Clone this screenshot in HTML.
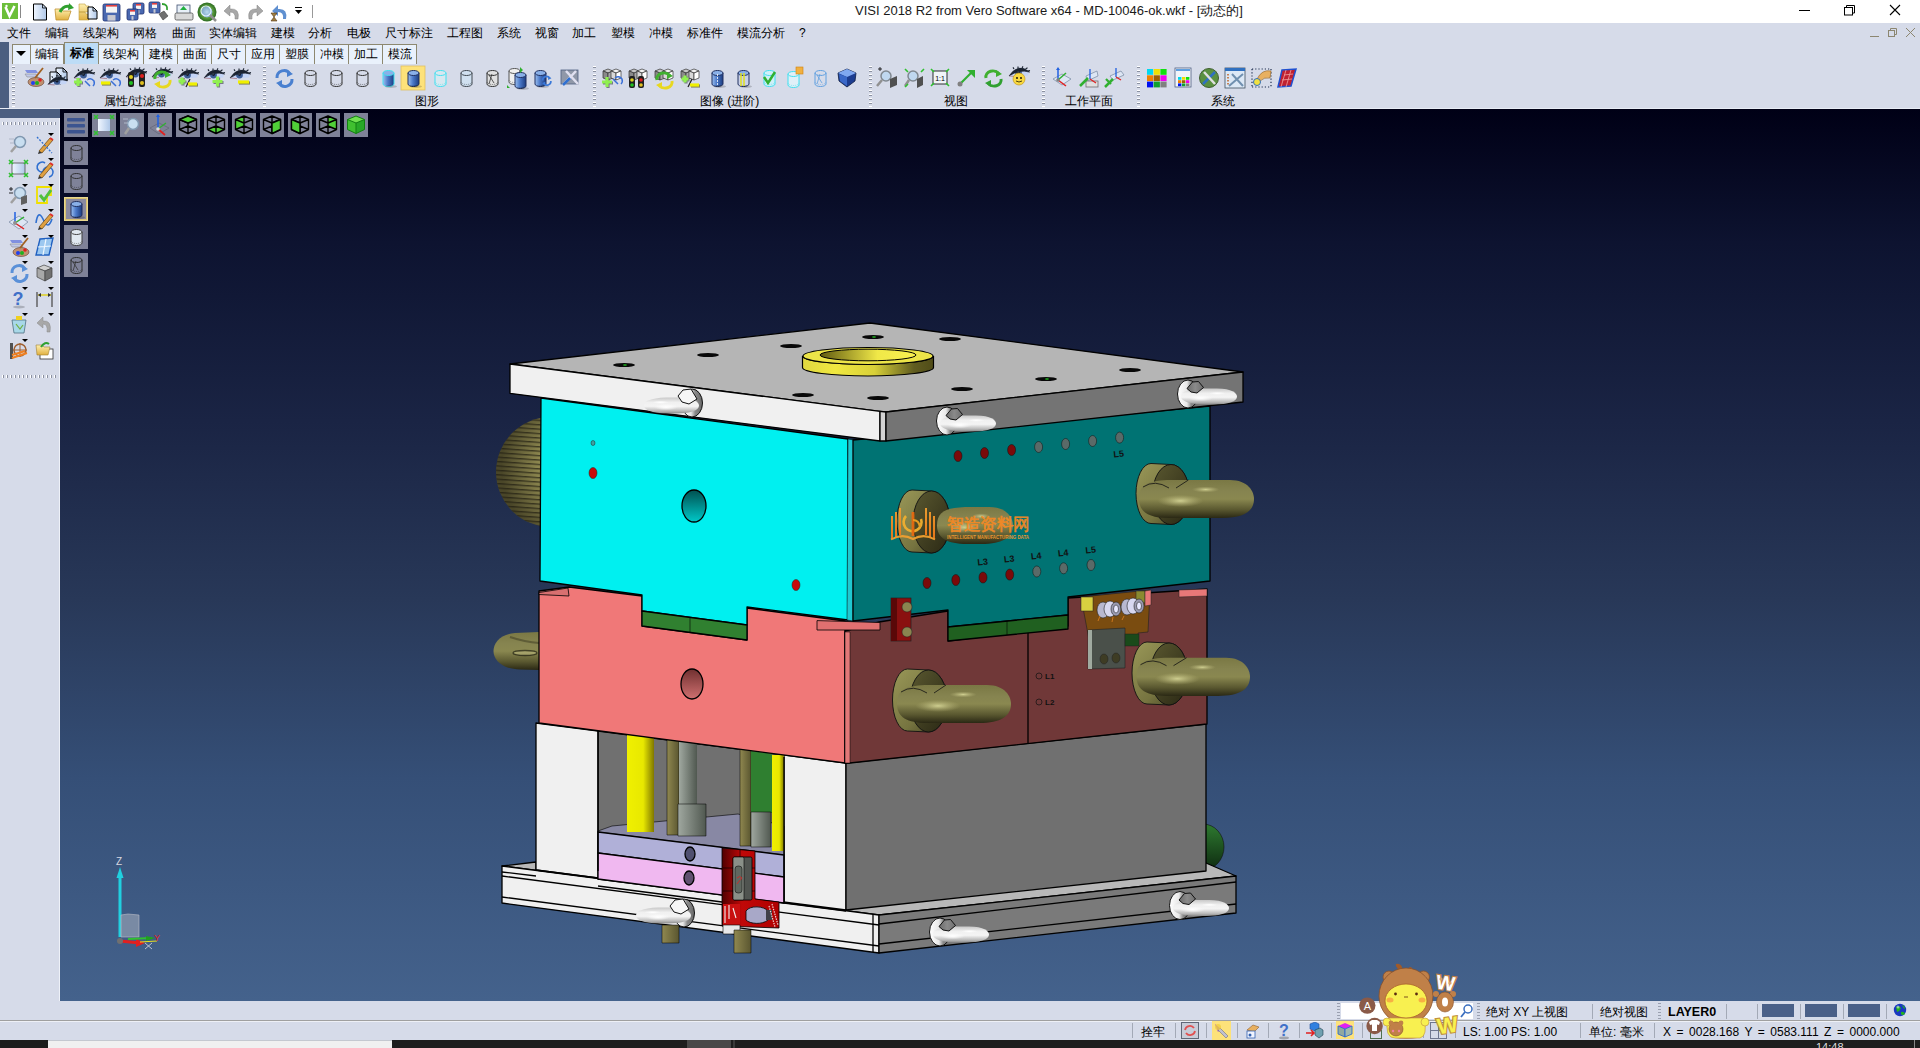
<!DOCTYPE html>
<html><head><meta charset="utf-8">
<style>
*{margin:0;padding:0;box-sizing:border-box}
html,body{width:1920px;height:1048px;overflow:hidden;background:#d6dbe9;font-family:"Liberation Sans",sans-serif;font-size:12px;font-weight:500;color:#000;position:relative}
.a{position:absolute}
.t{position:absolute;white-space:nowrap;line-height:1}
.tab{position:absolute;top:44px;height:20px;border:1px solid #8d8870;border-bottom:none;border-left:none;background:#e9f1fc;font-size:12px;text-align:center;line-height:19px;white-space:nowrap}
.vgrip{position:absolute;width:3px;background:repeating-linear-gradient(180deg,#fff 0 1px,#8a90a0 1px 2px,transparent 2px 4px)}
.hgrip{position:absolute;height:3px;background:repeating-linear-gradient(90deg,#fff 0 1px,#8a90a0 1px 2px,transparent 2px 4px)}
.sep{position:absolute;width:1px;background:#a3a9b6}
</style></head><body>
<!-- title bar -->
<div class="a" style="left:0;top:0;width:1920px;height:23px;background:#fff"></div>
<div class="t" style="left:855px;top:4px;font-size:13px;color:#1a1a1a">VISI 2018 R2 from Vero Software x64 - MD-10046-ok.wkf - [动态的]</div>
<svg class="a" style="left:1790px;top:0" width="130" height="23">
 <line x1="9" y1="10.5" x2="20" y2="10.5" stroke="#000" stroke-width="1"/>
 <rect x="54.5" y="7.5" width="8" height="7.5" fill="none" stroke="#000"/>
 <path d="M56.5 7.5 V5.5 H64.5 V13 H62.5" fill="none" stroke="#000"/>
 <path d="M100 5 L110 15 M110 5 L100 15" stroke="#000" stroke-width="1.1"/>
</svg>
<!-- MDI controls -->
<svg class="a" style="left:1860px;top:24px" width="60" height="18">
 <line x1="10" y1="12.5" x2="19" y2="12.5" stroke="#8c8670" stroke-width="1"/>
 <rect x="28.5" y="6.5" width="6" height="6" fill="none" stroke="#8c8670"/>
 <path d="M30.5 6.5 V4.5 H36.5 V10.5 H34.5" fill="none" stroke="#8c8670"/>
 <path d="M46 4 L55 13 M55 4 L46 13" stroke="#8c8670" stroke-width="1"/>
</svg>

<!-- menu -->
<div class="t" style="left:7px;top:27px">文件</div>
<div class="t" style="left:45px;top:27px">编辑</div>
<div class="t" style="left:83px;top:27px">线架构</div>
<div class="t" style="left:133px;top:27px">网格</div>
<div class="t" style="left:172px;top:27px">曲面</div>
<div class="t" style="left:209px;top:27px">实体编辑</div>
<div class="t" style="left:271px;top:27px">建模</div>
<div class="t" style="left:308px;top:27px">分析</div>
<div class="t" style="left:347px;top:27px">电极</div>
<div class="t" style="left:385px;top:27px">尺寸标注</div>
<div class="t" style="left:447px;top:27px">工程图</div>
<div class="t" style="left:497px;top:27px">系统</div>
<div class="t" style="left:535px;top:27px">视窗</div>
<div class="t" style="left:572px;top:27px">加工</div>
<div class="t" style="left:611px;top:27px">塑模</div>
<div class="t" style="left:649px;top:27px">冲模</div>
<div class="t" style="left:687px;top:27px">标准件</div>
<div class="t" style="left:737px;top:27px">模流分析</div>
<div class="t" style="left:799px;top:27px">?</div>

<!-- blue L strip -->
<div class="a" style="left:0;top:42px;width:9px;height:76px;background:#4b5e80"></div>
<div class="a" style="left:0;top:109px;width:60px;height:9px;background:#4b5e80"></div>

<!-- tabs -->
<div class="a" style="left:12px;top:44px;width:405px;height:20px;background:#e9f1fc;border-top:1px solid #8d8870;border-left:1px solid #8d8870"></div>
<svg class="a" style="left:15px;top:50px" width="12" height="8"><path d="M1 1 H11 L6 6 Z" fill="#000"/></svg>
<div class="tab" style="left:30px;width:34px;border-left:1px solid #8d8870">编辑</div>
<div class="tab" style="left:64px;top:42px;height:22px;width:35px;background:#bddcf6;font-weight:bold;line-height:21px;border-left:1px solid #8d8870">标准</div>
<div class="tab" style="left:99px;width:45px">线架构</div>
<div class="tab" style="left:144px;width:34px">建模</div>
<div class="tab" style="left:178px;width:34px">曲面</div>
<div class="tab" style="left:212px;width:34px">尺寸</div>
<div class="tab" style="left:246px;width:34px">应用</div>
<div class="tab" style="left:280px;width:35px">塑膜</div>
<div class="tab" style="left:315px;width:34px">冲模</div>
<div class="tab" style="left:349px;width:34px">加工</div>
<div class="tab" style="left:383px;width:34px">模流</div>

<!-- toolbar area -->
<div class="a" style="left:9px;top:64px;width:1911px;height:45px;background:#d6dbe9"></div>
<div class="a" style="left:0;top:108px;width:1920px;height:1px;background:#e8ecf5"></div>
<div class="vgrip" style="left:12px;top:66px;height:41px"></div>
<div class="vgrip" style="left:263px;top:66px;height:41px"></div>
<div class="vgrip" style="left:593px;top:66px;height:41px"></div>
<div class="vgrip" style="left:869px;top:66px;height:41px"></div>
<div class="vgrip" style="left:1042px;top:66px;height:41px"></div>
<div class="vgrip" style="left:1137px;top:66px;height:41px"></div>
<div class="t" style="left:104px;top:95px">属性/过滤器</div>
<div class="t" style="left:415px;top:95px">图形</div>
<div class="t" style="left:700px;top:95px">图像 (进阶)</div>
<div class="t" style="left:944px;top:95px">视图</div>
<div class="t" style="left:1065px;top:95px">工作平面</div>
<div class="t" style="left:1211px;top:95px">系统</div>

<!-- left panel -->
<div class="hgrip" style="left:2px;top:122px;width:56px"></div>
<div class="hgrip" style="left:2px;top:375px;width:56px"></div>
<div class="a" style="left:59px;top:118px;width:1px;height:883px;background:#eef1f8"></div>

<div id="vp" class="a" style="left:60px;top:109px;width:1860px;height:892px;background:linear-gradient(#000016 0%,#0d1330 15%,#1a2444 35%,#283858 55%,#354f77 75%,#44628c 100%)"></div>

<svg class="a" style="left:0;top:0" width="1920" height="1048" viewBox="0 0 1920 1048">
<defs>
 <radialGradient id="olv" cx="0.45" cy="0.35" r="0.7"><stop offset="0" stop-color="#c8c088"/><stop offset="0.6" stop-color="#8c8650"/><stop offset="1" stop-color="#4a4628"/></radialGradient>
 <linearGradient id="torO" x1="0" y1="0" x2="0" y2="1"><stop offset="0" stop-color="#7a7844"/><stop offset="0.3" stop-color="#868450"/><stop offset="0.5" stop-color="#8a8850"/><stop offset="0.78" stop-color="#5a5830"/><stop offset="1" stop-color="#2a2814"/></linearGradient>
 <radialGradient id="sph" cx="0.8" cy="0.45" r="0.75"><stop offset="0" stop-color="#d0c888"/><stop offset="0.45" stop-color="#9c9658"/><stop offset="1" stop-color="#4a4628"/></radialGradient>
 <linearGradient id="torW" x1="0" y1="0" x2="0" y2="1"><stop offset="0" stop-color="#c8c8c8"/><stop offset="0.3" stop-color="#f0f0f0"/><stop offset="0.55" stop-color="#f4f4f4"/><stop offset="0.85" stop-color="#b8b8b8"/><stop offset="1" stop-color="#8a8a8a"/></linearGradient>
 <linearGradient id="yel" x1="0" y1="0" x2="1" y2="0"><stop offset="0" stop-color="#e0d840"/><stop offset="0.25" stop-color="#f0e840"/><stop offset="0.55" stop-color="#d8d038"/><stop offset="0.85" stop-color="#605c20"/><stop offset="1" stop-color="#504c18"/></linearGradient>
 <linearGradient id="yelin" x1="0" y1="0" x2="1" y2="0"><stop offset="0" stop-color="#605a10"/><stop offset="0.6" stop-color="#f0e848"/><stop offset="1" stop-color="#f8f050"/></linearGradient>
 <linearGradient id="pinY" x1="0" y1="0" x2="1" y2="0"><stop offset="0" stop-color="#f0f000"/><stop offset="0.6" stop-color="#e8e800"/><stop offset="1" stop-color="#807800"/></linearGradient>
 <linearGradient id="pinO" x1="0" y1="0" x2="1" y2="0"><stop offset="0" stop-color="#908850"/><stop offset="1" stop-color="#5a5630"/></linearGradient>
 <linearGradient id="pinG" x1="0" y1="0" x2="1" y2="0"><stop offset="0" stop-color="#a0a8a0"/><stop offset="1" stop-color="#505850"/></linearGradient>
 <linearGradient id="holeC" x1="0" y1="0" x2="0" y2="1"><stop offset="0" stop-color="#005050"/><stop offset="1" stop-color="#00c8c8"/></linearGradient>
 <linearGradient id="holeP" x1="0" y1="0" x2="0" y2="1"><stop offset="0" stop-color="#703030"/><stop offset="1" stop-color="#d07070"/></linearGradient>
 <pattern id="stripe" width="40" height="4.4" patternUnits="userSpaceOnUse" patternTransform="rotate(4)"><rect y="2.8" width="40" height="1.1" fill="#1e1c10" opacity="0.85"/></pattern>
</defs>
<g stroke="#000" stroke-width="1.3" stroke-linejoin="round">
 <!-- olive sphere left (behind) -->
 <circle cx="551" cy="472" r="55" fill="url(#sph)" stroke="none"/><circle cx="551" cy="472" r="55" fill="url(#stripe)" stroke="none"/>
 <!-- left olive handle on pink -->
 <path d="M539 632 L515 633 C500 634 493.5 643 493.5 651 C493.5 660 502 669 520 669.5 L539 670 Z" fill="url(#torO)" stroke="none"/>
 <ellipse cx="525" cy="653" rx="12" ry="2.5" fill="#c8c488" opacity="0.5"/>
 <path d="M510 637 Q525 642 539 643" stroke="#3a3820" stroke-width="2" fill="none" opacity="0.5"/>
 <!-- green sphere right -->
 <defs><linearGradient id="grS" x1="0" y1="0" x2="0" y2="1"><stop offset="0" stop-color="#2e7a30"/><stop offset="1" stop-color="#0e2a10"/></linearGradient></defs><ellipse cx="1203" cy="847" rx="21" ry="23" fill="url(#grS)" stroke="#111" stroke-width="0.6"/>

 <!-- bottom clamp plate -->
 <polygon points="502,866 536,862 846,902 1206,863 1236,876 879,915" fill="#b8b8b8"/>
 <polygon points="502,866 879,915 879,953 502,903" fill="#f0f0f0"/>
 <polygon points="879,915 1236,876 1236,913 879,953" fill="#7a7a7a"/>
 <polyline points="502,876 879,925" fill="none"/>
 <polyline points="502,897 879,946" fill="none"/>
 <polyline points="879,924 1236,882" fill="none"/>
 <polyline points="879,944 1236,904" fill="none"/>
 <line x1="873" y1="914" x2="873" y2="952"/>
 <line x1="536" y1="862" x2="536" y2="870"/>
 <polyline points="502,872 536,876" fill="none"/>

 <!-- support blocks -->
 <polygon points="536,723 846,763 846,910 536,870" fill="#f0f0f0"/>
 <polygon points="846,763 1206,724 1206,871 846,910" fill="#707070"/>
 <!-- opening interior -->
 <polygon points="598,731 784,755 784,903 598,879" fill="#707070"/>
 <!-- ejector plates -->
 <polygon points="598,831 612,826 738,814 784,826 784,855 598,832" fill="#8888a4" stroke-width="0.6"/>
 <polygon points="598,832 784,855 784,877 598,853" fill="#b0b0d8"/>
 <polygon points="598,853 784,877 784,903 598,879" fill="#f0b8f0"/>
 <ellipse cx="690" cy="854" rx="5" ry="7" fill="#505070"/>
 <ellipse cx="689" cy="878" rx="5" ry="7" fill="#605070"/>
 <!-- pins -->
 <rect x="627" y="733" width="27" height="99" fill="url(#pinY)" stroke="none"/>
 <rect x="667" y="738" width="12" height="97" fill="url(#pinO)" stroke-width="0.5"/>
 <rect x="679" y="740" width="18" height="66" fill="url(#pinG)" stroke="none"/>
 <rect x="678" y="804" width="28" height="32" fill="url(#pinG)" stroke-width="0.5"/>
 <rect x="740" y="748" width="11" height="98" fill="url(#pinO)" stroke-width="0.5"/>
 <rect x="751" y="750" width="21" height="63" fill="#2f7f30" stroke="none"/>
 <rect x="751" y="812" width="20" height="35" fill="url(#pinG)" stroke-width="0.5"/>
 <rect x="772" y="755" width="12" height="96" fill="url(#pinY)" stroke="none"/>
 <!-- red component -->
 <defs><linearGradient id="redG" x1="0" y1="0" x2="1" y2="0"><stop offset="0" stop-color="#500000"/><stop offset="0.35" stop-color="#c00808"/><stop offset="1" stop-color="#b00000"/></linearGradient></defs>
 <polygon points="722,848 755,851 755,899 779,902 779,928 722,926" fill="url(#redG)" stroke-width="0.8"/>
 <path d="M723 868 H755 M723 891 H755 M740 849 V867" stroke="#000" stroke-width="0.6"/>
 <rect x="733" y="857" width="19" height="43" rx="1.5" fill="#505450" stroke-width="0.8"/>
 <rect x="733" y="857" width="11" height="43" rx="1.5" fill="#8a9088" stroke-width="0.6"/>
 <rect x="735" y="866" width="7" height="27" rx="3" fill="#606860" stroke-width="0.5"/>
 <path d="M737 878 q3 -3 5 0 q-3 3 -5 6" stroke="#e02020" stroke-width="0.8" fill="none"/>
 <rect x="723" y="904" width="17" height="21" fill="#c81010" stroke="none"/>
 <path d="M725 906 v17 M729 905 v14 M733 908 l3 10" stroke="#f0f0f0" stroke-width="1.1"/>
 <path d="M746 911 C750 905 764 906 768 911 L768 920 C762 925 750 924 746 920 Z" fill="#a8a8c8" stroke-width="0.8"/>
 <rect x="766" y="910" width="6" height="10" fill="#404048" stroke="none"/>
 <path d="M772 904 L778 925 M769 906 L775 927" stroke="#f0d0d0" stroke-width="1.2" stroke-dasharray="1.5 1"/>
 <rect x="723" y="925" width="17" height="9" fill="#e8e8e8" stroke-width="0.6"/>
 <!-- lower pins -->
 <rect x="662" y="925" width="17" height="18" fill="url(#pinO)" stroke-width="0.5"/>
 <rect x="734" y="930" width="17" height="23" fill="url(#pinO)" stroke-width="0.5"/>
 <line x1="598" y1="731" x2="598" y2="871"/>
 <polyline points="536,870 598,878" fill="none"/>
 <polyline points="784,903 846,911" fill="none"/>
 <polyline points="598,886 722,902" fill="none"/>
 <line x1="784" y1="757" x2="784" y2="903"/>

 <!-- pink B plate front -->
 <polygon points="539,591 569,587 642,596 642,626 747,640 747,608 845,621 845,763 539,723" fill="#f07878"/>
 <polygon points="539,592.5 568,588 569,596 539,594.5" fill="#d87070" stroke-width="0.8"/>
 
 <ellipse cx="692" cy="684" rx="11" ry="15" fill="url(#holeP)"/>
 <!-- dark red right face -->
 <polygon points="845,631 879,622 948,611 948,641 1068,626 1068,598 1207,589 1207,724 850,763 845,763" fill="#703838"/>
 
 <line x1="1028" y1="632" x2="1028" y2="743"/>
 <rect x="845" y="632" width="5" height="131" fill="#e07878" stroke-width="0.5"/>
 <polygon points="817,620.6 880,622.5 880,630 817,630" fill="#e07070" stroke-width="0.8"/>

 <!-- cyan A plate -->
 <polygon points="541,398 848,439 848,620 747,607 747,625 642,611 642,595 540,581" fill="#00f0f0"/>
 <polygon points="848,439 854,440 853,621 847,620" fill="#20c8d0" stroke-width="0.5"/>
 <polygon points="853,440 1210,406 1210,581 1068,597 1068,615 948,627 948,610 853,621" fill="#007373"/>
 <!-- green strips -->
 <polygon points="642,611 747,625 747,640 642,626" fill="#308030"/>
 <line x1="690" y1="617" x2="690" y2="632" stroke-width="0.6"/>
 <polygon points="948,627 1068,615 1068,629 948,641" fill="#206020"/>
 <line x1="1007" y1="621" x2="1007" y2="635" stroke-width="0.6"/>
 <ellipse cx="694" cy="506" rx="12" ry="16" fill="url(#holeC)"/>

 <!-- top clamp plate -->
 <polygon points="510,364 870,323 1243,372 886,412 880,411.3" fill="#b5b5b5"/>
 <polygon points="510,364 880,411.3 880,441 510,393.3" fill="#f0f0f0"/>
 <polygon points="880,411.3 886,412 886,441 880,441" fill="#d4d4d4"/>
 <polygon points="886,412 1243,372 1243,402 886,441" fill="#747474"/>
</g>
<g>
<defs>
<linearGradient id="discW" x1="0" y1="0" x2="1" y2="0"><stop offset="0" stop-color="#ffffff"/><stop offset="0.45" stop-color="#e8e8e8"/><stop offset="0.65" stop-color="#8a8a8a"/><stop offset="1" stop-color="#6a6a6a"/></linearGradient>
<linearGradient id="discWf" x1="1" y1="0" x2="0" y2="0"><stop offset="0" stop-color="#f4f4f4"/><stop offset="0.55" stop-color="#e8e8e8"/><stop offset="0.7" stop-color="#9a9a9a"/><stop offset="1" stop-color="#6a6a6a"/></linearGradient>
<linearGradient id="flO" x1="0" y1="0" x2="1" y2="1"><stop offset="0" stop-color="#9a9858"/><stop offset="0.6" stop-color="#767440"/><stop offset="1" stop-color="#3e3c20"/></linearGradient>
<radialGradient id="hlW"><stop offset="0" stop-color="#fff" stop-opacity="1"/><stop offset="1" stop-color="#fff" stop-opacity="0"/></radialGradient>
<linearGradient id="hexG" x1="0" y1="0" x2="1" y2="0"><stop offset="0" stop-color="#6a6a6a"/><stop offset="0.5" stop-color="#8a8a8a"/><stop offset="1" stop-color="#6e6e6e"/></linearGradient>
<radialGradient id="hlO"><stop offset="0" stop-color="#dcdc9c" stop-opacity="0.85"/><stop offset="1" stop-color="#b8b478" stop-opacity="0"/></radialGradient>
<linearGradient id="bossO" x1="0" y1="0" x2="1" y2="1"><stop offset="0" stop-color="#5a5830"/><stop offset="1" stop-color="#2a2814"/></linearGradient>
</defs>
<ellipse cx="624" cy="365" rx="11" ry="2" fill="#080808"/>
<ellipse cx="625" cy="365" rx="2" ry="0.8" fill="#20c020"/>
<ellipse cx="708" cy="355" rx="11" ry="2" fill="#080808"/>
<ellipse cx="791" cy="346" rx="11" ry="2" fill="#080808"/>
<ellipse cx="873" cy="337" rx="11" ry="2" fill="#080808"/>
<ellipse cx="874" cy="337" rx="2" ry="0.8" fill="#20c020"/>
<ellipse cx="950" cy="339" rx="11" ry="2" fill="#080808"/>
<ellipse cx="803" cy="395" rx="11" ry="2" fill="#080808"/>
<ellipse cx="878" cy="398" rx="11" ry="2" fill="#080808"/>
<ellipse cx="962" cy="389" rx="11" ry="2" fill="#080808"/>
<ellipse cx="1046" cy="379" rx="11" ry="2" fill="#080808"/>
<ellipse cx="1047" cy="379" rx="2" ry="0.8" fill="#20c020"/>
<ellipse cx="1130" cy="370" rx="11" ry="2" fill="#080808"/>
<path d="M802.5 356 A65.5 8.5 0 0 0 933.5 356 L933.5 367.5 A65.5 8.5 0 0 1 802.5 367.5 Z" fill="url(#yel)" stroke="#000" stroke-width="1.2"/>
<ellipse cx="868" cy="356" rx="65" ry="8.5" fill="#ece448" stroke="#000" stroke-width="1.2"/>
<ellipse cx="868" cy="355" rx="48" ry="5.8" fill="url(#yelin)" stroke="#000" stroke-width="1"/>
<ellipse cx="692" cy="403" rx="10.5" ry="14" fill="url(#discW)" stroke="#111" stroke-width="1"/>
<path d="M644 405.5 C644 401.5 650 398.0 666 397.5 L679 397.5 C694 397.5 699 402.3 699 405.5 C699 410.3 691 413.5 675 413.5 L668 413.5 C651 413.5 644 409.5 644 405.5 Z" fill="url(#torW)" stroke="none"/>
<ellipse cx="666.0" cy="407.1" rx="12.1" ry="3.2" fill="url(#hlW)"/>
<ellipse cx="660.5" cy="402.3" rx="8.25" ry="1.6" fill="url(#hlW)"/>
<polygon points="678,396 683,390 691,389 697,399 689,404 682,402" fill="#f6f6f6" stroke="#111" stroke-width="1"/>
<ellipse cx="947" cy="421" rx="10.5" ry="14" fill="url(#discW)" stroke="#111" stroke-width="1"/>
<path d="M940 423.5 C940 419.5 946 416.0 962 415.5 L976 415.5 C991 415.5 996 420.3 996 423.5 C996 428.3 988 431.5 972 431.5 L964 431.5 C947 431.5 940 427.5 940 423.5 Z" fill="url(#torW)" stroke="none"/>
<ellipse cx="959.6" cy="425.1" rx="12.32" ry="3.2" fill="url(#hlW)"/>
<ellipse cx="976.4" cy="420.3" rx="8.4" ry="1.6" fill="url(#hlW)"/>
<polygon points="946,415.5 951.5,409 957.5,408.5 962.5,414.5 956,420 950,419" fill="url(#hexG)" stroke="#111" stroke-width="1"/>
<ellipse cx="1188" cy="394" rx="10.5" ry="14" fill="url(#discW)" stroke="#111" stroke-width="1"/>
<path d="M1181 396.5 C1181 392.5 1187 389.0 1203 388.5 L1217 388.5 C1232 388.5 1237 393.3 1237 396.5 C1237 401.3 1229 404.5 1213 404.5 L1205 404.5 C1188 404.5 1181 400.5 1181 396.5 Z" fill="url(#torW)" stroke="none"/>
<ellipse cx="1200.6" cy="398.1" rx="12.32" ry="3.2" fill="url(#hlW)"/>
<ellipse cx="1217.4" cy="393.3" rx="8.4" ry="1.6" fill="url(#hlW)"/>
<polygon points="1187,388.5 1192.5,382 1198.5,381.5 1203.5,387.5 1197,393 1191,392" fill="url(#hexG)" stroke="#111" stroke-width="1"/>
<ellipse cx="684" cy="913" rx="10.5" ry="14" fill="url(#discW)" stroke="#111" stroke-width="1"/>
<path d="M636 915.5 C636 911.5 642 908.0 658 907.5 L671 907.5 C686 907.5 691 912.3 691 915.5 C691 920.3 683 923.5 667 923.5 L660 923.5 C643 923.5 636 919.5 636 915.5 Z" fill="url(#torW)" stroke="none"/>
<ellipse cx="658.0" cy="917.1" rx="12.1" ry="3.2" fill="url(#hlW)"/>
<ellipse cx="652.5" cy="912.3" rx="8.25" ry="1.6" fill="url(#hlW)"/>
<polygon points="670,906 675,900 683,899 689,909 681,914 674,912" fill="#f6f6f6" stroke="#111" stroke-width="1"/>
<ellipse cx="940" cy="932" rx="10.5" ry="14" fill="url(#discW)" stroke="#111" stroke-width="1"/>
<path d="M933 934.5 C933 930.5 939 927.0 955 926.5 L969 926.5 C984 926.5 989 931.3 989 934.5 C989 939.3 981 942.5 965 942.5 L957 942.5 C940 942.5 933 938.5 933 934.5 Z" fill="url(#torW)" stroke="none"/>
<ellipse cx="952.6" cy="936.1" rx="12.32" ry="3.2" fill="url(#hlW)"/>
<ellipse cx="969.4" cy="931.3" rx="8.4" ry="1.6" fill="url(#hlW)"/>
<polygon points="939,926.5 944.5,920 950.5,919.5 955.5,925.5 949,931 943,930" fill="url(#hexG)" stroke="#111" stroke-width="1"/>
<ellipse cx="1180" cy="905.5" rx="10.5" ry="14" fill="url(#discW)" stroke="#111" stroke-width="1"/>
<path d="M1173 908.0 C1173 904.0 1179 900.5 1195 900.0 L1209 900.0 C1224 900.0 1229 904.8 1229 908.0 C1229 912.8 1221 916.0 1205 916.0 L1197 916.0 C1180 916.0 1173 912.0 1173 908.0 Z" fill="url(#torW)" stroke="none"/>
<ellipse cx="1192.6" cy="909.6" rx="12.32" ry="3.2" fill="url(#hlW)"/>
<ellipse cx="1209.4" cy="904.8" rx="8.4" ry="1.6" fill="url(#hlW)"/>
<polygon points="1179,900.0 1184.5,893.5 1190.5,893.0 1195.5,899.0 1189,904.5 1183,903.5" fill="url(#hexG)" stroke="#111" stroke-width="1"/>
<path d="M912 490 L931.5 491 A18.5 31 0 0 1 931.5 553 L912 552 A15 31 0 0 1 912 490 Z" fill="url(#flO)" stroke="#111" stroke-width="0.9"/>
<ellipse cx="931.5" cy="522" rx="18.5" ry="31" fill="url(#bossO)" stroke="#111" stroke-width="0.9"/>
<path d="M937 525.5 C937 512 945 508 965 507 L989 507 C1007 507 1013 518.1 1013 525.5 C1013 537.34 1003 544 981 544 L967 544 C947 544 937 538 937 525.5 Z" fill="url(#torO)" stroke="none"/>
<ellipse cx="964.36" cy="527.35" rx="15.200000000000001" ry="5.92" fill="url(#hlO)"/>
<ellipse cx="981.08" cy="516.25" rx="9.12" ry="2.96" fill="url(#hlO)"/>

<path d="M1151 463.5 L1171 464.5 A18.4 30 0 0 1 1171 524.5 L1151 523.5 A15 30 0 0 1 1151 463.5 Z" fill="url(#flO)" stroke="#111" stroke-width="0.9"/>
<ellipse cx="1171" cy="494.5" rx="18.4" ry="30" fill="url(#bossO)" stroke="#111" stroke-width="0.9"/>
<path d="M1139 499.0 C1139 485 1147 481 1167 480 L1230 480 C1248 480 1254 491.4 1254 499.0 C1254 511.16 1244 518 1222 518 L1169 518 C1149 518 1139 512 1139 499.0 Z" fill="url(#torO)" stroke="none"/>
<ellipse cx="1180.4" cy="500.9" rx="23.0" ry="6.08" fill="url(#hlO)"/>
<ellipse cx="1205.7" cy="489.5" rx="13.799999999999999" ry="3.04" fill="url(#hlO)"/>
<path d="M1143 487 Q1155 479 1169 488 M1176 488 L1188.4 480" fill="none" stroke="#111" stroke-width="0.8"/>
<path d="M907.5 669 L928.5 670 A18.5 31 0 0 1 928.5 732 L907.5 731 A15 31 0 0 1 907.5 669 Z" fill="url(#flO)" stroke="#111" stroke-width="0.9"/>
<ellipse cx="928.5" cy="701" rx="18.5" ry="31" fill="url(#bossO)" stroke="#111" stroke-width="0.9"/>
<path d="M897 704.0 C897 690 905 686 925 685 L987 685 C1005 685 1011 696.4 1011 704.0 C1011 716.16 1001 723 979 723 L927 723 C907 723 897 717 897 704.0 Z" fill="url(#torO)" stroke="none"/>
<ellipse cx="938.04" cy="705.9" rx="22.8" ry="6.08" fill="url(#hlO)"/>
<ellipse cx="963.12" cy="694.5" rx="13.68" ry="3.04" fill="url(#hlO)"/>
<path d="M901 692 Q913 684 927 693 M934 693 L946.0 685" fill="none" stroke="#111" stroke-width="0.8"/>
<path d="M1147 642 L1169 643 A18.6 31 0 0 1 1169 705 L1147 704 A15 31 0 0 1 1147 642 Z" fill="url(#flO)" stroke="#111" stroke-width="0.9"/>
<ellipse cx="1169" cy="674" rx="18.6" ry="31" fill="url(#bossO)" stroke="#111" stroke-width="0.9"/>
<path d="M1136.5 676.85 C1136.5 662.7 1144.5 658.7 1164.5 657.7 L1226 657.7 C1244 657.7 1250 669.19 1250 676.85 C1250 689.106 1240 696 1218 696 L1166.5 696 C1146.5 696 1136.5 690 1136.5 676.85 Z" fill="url(#torO)" stroke="none"/>
<ellipse cx="1177.36" cy="678.765" rx="22.700000000000003" ry="6.127999999999993" fill="url(#hlO)"/>
<ellipse cx="1202.33" cy="667.2750000000001" rx="13.62" ry="3.0639999999999965" fill="url(#hlO)"/>
<path d="M1140.5 664.7 Q1152.5 656.7 1166.5 665.7 M1173.5 665.7 L1186.6 657.7" fill="none" stroke="#111" stroke-width="0.8"/>
<ellipse cx="958" cy="456" rx="4" ry="5.5" fill="#7a0a0a" stroke="#111" stroke-width="0.5"/>
<ellipse cx="984.5" cy="453" rx="4" ry="5.5" fill="#7a0a0a" stroke="#111" stroke-width="0.5"/>
<ellipse cx="1011.6" cy="450" rx="4" ry="5.5" fill="#7a0a0a" stroke="#111" stroke-width="0.5"/>
<ellipse cx="927" cy="583" rx="4" ry="5.5" fill="#7a0a0a" stroke="#111" stroke-width="0.5"/>
<ellipse cx="955.8" cy="580" rx="4" ry="5.5" fill="#7a0a0a" stroke="#111" stroke-width="0.5"/>
<ellipse cx="983" cy="577.5" rx="4" ry="5.5" fill="#7a0a0a" stroke="#111" stroke-width="0.5"/>
<ellipse cx="1009.7" cy="574.6" rx="4" ry="5.5" fill="#7a0a0a" stroke="#111" stroke-width="0.5"/>
<ellipse cx="1038.6" cy="447" rx="4" ry="5.5" fill="#5a6a68" stroke="#111" stroke-width="0.5"/>
<ellipse cx="1065.6" cy="444" rx="4" ry="5.5" fill="#5a6a68" stroke="#111" stroke-width="0.5"/>
<ellipse cx="1092.6" cy="441" rx="4" ry="5.5" fill="#5a6a68" stroke="#111" stroke-width="0.5"/>
<ellipse cx="1119.6" cy="437.6" rx="4" ry="5.5" fill="#5a6a68" stroke="#111" stroke-width="0.5"/>
<ellipse cx="1036.8" cy="571.5" rx="4" ry="5.5" fill="#5a6a68" stroke="#111" stroke-width="0.5"/>
<ellipse cx="1063.6" cy="568.3" rx="4" ry="5.5" fill="#5a6a68" stroke="#111" stroke-width="0.5"/>
<ellipse cx="1091" cy="565" rx="4" ry="5.5" fill="#5a6a68" stroke="#111" stroke-width="0.5"/>
<text x="1119" y="457" font-family="Liberation Sans" font-size="9" font-weight="bold" text-anchor="middle" fill="#111" transform="rotate(-6 1119 457)">L5</text>
<text x="983" y="565" font-family="Liberation Sans" font-size="9" font-weight="bold" text-anchor="middle" fill="#111" transform="rotate(-6 983 565)">L3</text>
<text x="1009.6" y="562" font-family="Liberation Sans" font-size="9" font-weight="bold" text-anchor="middle" fill="#111" transform="rotate(-6 1009.6 562)">L3</text>
<text x="1036.6" y="559" font-family="Liberation Sans" font-size="9" font-weight="bold" text-anchor="middle" fill="#111" transform="rotate(-6 1036.6 559)">L4</text>
<text x="1063.6" y="556" font-family="Liberation Sans" font-size="9" font-weight="bold" text-anchor="middle" fill="#111" transform="rotate(-6 1063.6 556)">L4</text>
<text x="1091" y="553" font-family="Liberation Sans" font-size="9" font-weight="bold" text-anchor="middle" fill="#111" transform="rotate(-6 1091 553)">L5</text>
<ellipse cx="593" cy="473" rx="4" ry="5.5" fill="#c80a0a" stroke="#222" stroke-width="0.5"/>
<ellipse cx="796" cy="585" rx="4" ry="5.5" fill="#c80a0a" stroke="#222" stroke-width="0.5"/>
<ellipse cx="593" cy="443" rx="2" ry="2.5" fill="#40a0a0" stroke="#222" stroke-width="0.5"/>
<circle cx="1039" cy="676" r="3" fill="none" stroke="#111" stroke-width="0.7"/><text x="1045" y="679" font-family="Liberation Sans" font-size="8" font-weight="bold" fill="#111">L1</text>
<circle cx="1039" cy="702" r="3" fill="none" stroke="#111" stroke-width="0.7"/><text x="1045" y="705" font-family="Liberation Sans" font-size="8" font-weight="bold" fill="#111">L2</text>
<rect x="891" y="598" width="20" height="43" fill="#8a1010" stroke="#222" stroke-width="0.7"/>
<rect x="891" y="598" width="6" height="43" fill="#5a0808" stroke="none"/>
<circle cx="907" cy="607" r="5" fill="#8a8450" stroke="#222" stroke-width="0.5"/>
<circle cx="907" cy="632" r="5" fill="#8a8450" stroke="#222" stroke-width="0.5"/>
<polygon points="1081,597 1150,590 1148,632 1138,633 1138,644 1090,645" fill="#7a4c10" stroke="#222" stroke-width="0.6"/>
<rect x="1081" y="597" width="12" height="14" fill="#d8d040" stroke="#222" stroke-width="0.5"/>
<rect x="1136" y="591" width="9" height="12" fill="#8a8a30" stroke="#222" stroke-width="0.5"/>
<polygon points="1145,591 1151,590 1151,605 1145,606" fill="#e87878" stroke="#222" stroke-width="0.5"/>
<polygon points="1179,590 1207,589 1207,596 1179,597" fill="#e87878" stroke="#222" stroke-width="0.5"/>
<g stroke="#222" stroke-width="0.6">
<ellipse cx="1103" cy="610" rx="6" ry="8" fill="#b8b8d0"/><ellipse cx="1110" cy="609" rx="6" ry="8" fill="#d8d8f0"/><ellipse cx="1116" cy="609" rx="5" ry="7" fill="#9a9ab0"/><ellipse cx="1116" cy="609" rx="2.5" ry="4" fill="#e8e8ff"/>
<ellipse cx="1127" cy="607" rx="6" ry="8" fill="#b8b8d0"/><ellipse cx="1133" cy="606" rx="6" ry="8" fill="#d8d8f0"/><ellipse cx="1139" cy="606" rx="5" ry="7" fill="#9a9ab0"/><ellipse cx="1139" cy="606" rx="2.5" ry="4" fill="#e8e8ff"/>
</g>
<path d="M1098 621 l2 -5 M1112 622 l1 -5 M1122 620 l2 -4" stroke="#e08020" stroke-width="0.8"/>
<polygon points="1088,630 1125,628 1125,668 1088,669" fill="#4a504a" stroke="#222" stroke-width="0.6"/>
<polygon points="1088,630 1092,630 1092,669 1088,669" fill="#a0aaa0" stroke="none"/>
<ellipse cx="1104" cy="659" rx="4" ry="5" fill="#3e3c24" stroke="#222" stroke-width="0.5"/><ellipse cx="1116" cy="658" rx="4" ry="5" fill="#3e3c24" stroke="#222" stroke-width="0.5"/>
<rect x="1125" y="634" width="14" height="12" fill="#1a4a1a" stroke="#222" stroke-width="0.5"/>
</g>
</svg>
<svg class="a" style="left:0;top:0" width="1920" height="1048">
<defs>
<linearGradient id="gBlue" x1="0" y1="0" x2="1" y2="0"><stop offset="0" stop-color="#9cc0f0"/><stop offset="0.45" stop-color="#4a78c8"/><stop offset="1" stop-color="#1c3c80"/></linearGradient>
<linearGradient id="gLBlue" x1="0" y1="0" x2="1" y2="0"><stop offset="0" stop-color="#f0f6ff"/><stop offset="1" stop-color="#b0c8e8"/></linearGradient>
<linearGradient id="gGreen" x1="0" y1="0" x2="0" y2="1"><stop offset="0" stop-color="#90f070"/><stop offset="1" stop-color="#20a020"/></linearGradient>
<linearGradient id="gGray" x1="0" y1="0" x2="1" y2="1"><stop offset="0" stop-color="#e8e8e8"/><stop offset="1" stop-color="#707070"/></linearGradient>
<linearGradient id="gFolder" x1="0" y1="0" x2="0" y2="1"><stop offset="0" stop-color="#fff0b0"/><stop offset="1" stop-color="#e0b040"/></linearGradient>
<radialGradient id="gEye" cx="0.5" cy="0.5" r="0.5"><stop offset="0" stop-color="#203050"/><stop offset="0.5" stop-color="#5878a8"/><stop offset="1" stop-color="#a0b0c8"/></radialGradient>
<radialGradient id="gZoomG" cx="0.5" cy="0.5" r="0.5"><stop offset="0" stop-color="#b8d8f0"/><stop offset="0.55" stop-color="#80a8c8"/><stop offset="0.6" stop-color="#60a040"/><stop offset="1" stop-color="#2a6a20"/></radialGradient>
</defs>
<rect x="2" y="3" width="16" height="16" fill="#6cbf3a"/><path d="M5.5 7 L9.5 16 L14.5 6" fill="none" stroke="#fff" stroke-width="2.6"/><circle cx="6.5" cy="6" r="1.2" fill="#fff"/>
<rect x="20" y="5" width="1" height="13" fill="#888"/>
<path d="M33.5 4 H42.5 L46.5 8 V20 H33.5 Z" fill="url(#gLBlue)" stroke="#000" stroke-width="1"/><path d="M42.5 4 V8 H46.5" fill="none" stroke="#000" stroke-width="0.8"/>
<path d="M55 9 H61 L63 11 H71 L68 20 H56 Z" fill="url(#gFolder)" stroke="#c09030" stroke-width="0.8"/><path d="M60 12 Q64 4 71 7" fill="none" stroke="#30a030" stroke-width="3"/><path d="M69 3 L74 8 L68 10 Z" fill="#30a030"/>
<path d="M79 4 H85 L86 6 H89 V12 H79 Z M79 12 H85 L86 14 H89 V20 H79 Z" fill="url(#gFolder)" stroke="#c0a040" stroke-width="0.6"/><path d="M88 7 H93 L97 11 V19 H88 Z" fill="url(#gLBlue)" stroke="#000" stroke-width="1"/><path d="M93 7 V11 H97" fill="none" stroke="#000" stroke-width="0.8"/>
<rect x="103" y="4" width="17" height="17" rx="1.5" fill="#4a68b0" stroke="#203070" stroke-width="0.8"/>
<rect x="106" y="5" width="11" height="7.65" fill="#f4f4f4"/>
<rect x="106" y="5" width="11" height="1.6" fill="#e04040"/>
<rect x="107.5" y="15.05" width="8" height="5.61" fill="#c8c8d0"/>
<rect x="133" y="3" width="11" height="11" rx="1.5" fill="#4a68b0" stroke="#203070" stroke-width="0.8"/>
<rect x="136" y="4" width="5" height="4.95" fill="#f4f4f4"/>
<rect x="136" y="4" width="5" height="1.6" fill="#e04040"/>
<rect x="137.5" y="10.15" width="2" height="3.6300000000000003" fill="#c8c8d0"/><rect x="127" y="9" width="11" height="11" rx="1.5" fill="#4a68b0" stroke="#203070" stroke-width="0.8"/>
<rect x="130" y="10" width="5" height="4.95" fill="#f4f4f4"/>
<rect x="130" y="10" width="5" height="1.6" fill="#e04040"/>
<rect x="131.5" y="16.15" width="2" height="3.6300000000000003" fill="#c8c8d0"/>
<rect x="149" y="2" width="11" height="11" rx="1.5" fill="#4a68b0" stroke="#203070" stroke-width="0.8"/>
<rect x="152" y="3" width="5" height="4.95" fill="#f4f4f4"/>
<rect x="152" y="3" width="5" height="1.6" fill="#e04040"/>
<rect x="153.5" y="9.15" width="2" height="3.6300000000000003" fill="#c8c8d0"/><path d="M162 4 Q168 4 167 10" fill="none" stroke="#30a030" stroke-width="1.8"/><path d="M159 14 L164 11 L168 16 L163 20 Z" fill="#707070" stroke="#404040" stroke-width="0.6"/>
<rect x="177" y="5" width="13" height="9" fill="#e8f0f8" stroke="#405070" stroke-width="0.8"/><path d="M183.5 6 L187 10 H180 Z" fill="#20b040"/><rect x="175" y="13" width="18" height="7" rx="1.5" fill="#d8d8d8" stroke="#505050" stroke-width="0.8"/>
<circle cx="207" cy="12" r="9.5" fill="url(#gZoomG)"/><circle cx="206" cy="11" r="5" fill="none" stroke="#e0f0ff" stroke-width="1.2"/><path d="M210 15 L216 21" stroke="#909090" stroke-width="2.5"/>
<path d="M238 19 Q240 8 230 9 L230 5 L224 11 L230 16 L230 12 Q236 12 235 19 Z" fill="#a8a8a8" stroke="#808080" stroke-width="0.5"/>
<path d="M249 19 Q247 8 257 9 L257 5 L263 11 L257 16 L257 12 Q251 12 252 19 Z" fill="#a8a8a8" stroke="#808080" stroke-width="0.5"/>
<path d="M286 19 Q288 8 278 9 L278 5 L272 11 L278 16 L278 12 Q284 12 283 19 Z" fill="#6090d0"/><path d="M271 13 H277 L274 17 L277 21 H271 L274 17 Z" fill="#a08040" stroke="#503010" stroke-width="0.6"/>
<path d="M295 7.5 H302" stroke="#000" stroke-width="1"/><path d="M295 10 H302 L298.5 14 Z" fill="#000"/>
<rect x="312" y="5" width="1" height="13" fill="#999"/>
<path d="M25 70 H36 L38 73 H27 Z" fill="#8090e0"/>
<path d="M25 74 H36 L38 77 H27 Z" fill="#c0c8e8" stroke="#808080" stroke-width="0.5"/>
<ellipse cx="36" cy="82" rx="8" ry="4.5" fill="#c09070" stroke="#604030" stroke-width="0.6"/>
<circle cx="33" cy="83" r="2" fill="#2040f0"/><circle cx="37" cy="83" r="2" fill="#20b020"/><circle cx="40" cy="80" r="1.8" fill="#e02020"/>
<path d="M35 78 L43 68" stroke="#a06020" stroke-width="1.8"/>
<path d="M56 68 H63 L67 72 V81 H56 Z" fill="url(#gLBlue)" stroke="#000" stroke-width="1"/><path d="M63 68 V72 H67" fill="none" stroke="#000" stroke-width="0.8"/><path d="M50 72 H57 L61 76 V84 H50 Z" fill="url(#gLBlue)" stroke="#000" stroke-width="1"/><path d="M57 72 V76 H61" fill="none" stroke="#000" stroke-width="0.8"/><g transform="translate(48 74) scale(0.95)"><path d="M0 11 Q10 3 20 7.5 L19 10.5 Q10 11.8 0 11 Z" fill="#c4d4f6"/><circle cx="9.5" cy="8" r="3.4" fill="#3c5c94"/><circle cx="9.5" cy="7.6" r="1.4" fill="#101828"/><circle cx="9" cy="6.6" r="0.8" fill="#d8ecff"/><path d="M0 11 Q9 -2.5 20.5 7 Q10 4 0 11 Z" fill="#1a2230" stroke="#1a2230" stroke-width="0.8"/><path d="M5 4 l-1 -1.6 M9 3 l0 -1.6 M13 3 l1 -1.6 M16.5 4 l2 -1.2 M19 6 l2 -0.5" stroke="#1a2230" stroke-width="1.1"/><path d="M0.5 11 L7 11.6" stroke="#b08898" stroke-width="1"/></g>
<path d="M74 78 Q84 70 94 74.5 L93 77.5 Q84 78.8 74 78 Z" fill="#c4d4f6"/><circle cx="83.5" cy="75" r="3.4" fill="#3c5c94"/><circle cx="83.5" cy="74.6" r="1.4" fill="#101828"/><circle cx="83" cy="73.6" r="0.8" fill="#d8ecff"/><path d="M74 78 Q83 64.5 94.5 74 Q84 71 74 78 Z" fill="#1a2230" stroke="#1a2230" stroke-width="0.8"/><path d="M79 71 l-1 -1.6 M83 70 l0 -1.6 M87 70 l1 -1.6 M90.5 71 l2 -1.2 M93 73 l2 -0.5" stroke="#1a2230" stroke-width="1.1"/><path d="M74.5 78 L81 78.6" stroke="#b08898" stroke-width="1"/><path d="M75.0 83 H83.0 M79 79.0 V87.0" stroke="#505060" stroke-width="3.2" opacity="0.7"/><path d="M74.0 82 H82.0 M78 78.0 V86.0" stroke="#90f050" stroke-width="3.2"/><path d="M85 81 L90 86 M87 80 Q91 77 94 81 Q95 84 93 86" fill="none" stroke="#3a70d8" stroke-width="1.5"/>
<path d="M100 78 Q110 70 120 74.5 L119 77.5 Q110 78.8 100 78 Z" fill="#c4d4f6"/><circle cx="109.5" cy="75" r="3.4" fill="#3c5c94"/><circle cx="109.5" cy="74.6" r="1.4" fill="#101828"/><circle cx="109" cy="73.6" r="0.8" fill="#d8ecff"/><path d="M100 78 Q109 64.5 120.5 74 Q110 71 100 78 Z" fill="#1a2230" stroke="#1a2230" stroke-width="0.8"/><path d="M105 71 l-1 -1.6 M109 70 l0 -1.6 M113 70 l1 -1.6 M116.5 71 l2 -1.2 M119 73 l2 -0.5" stroke="#1a2230" stroke-width="1.1"/><path d="M100.5 78 L107 78.6" stroke="#b08898" stroke-width="1"/><path d="M102 84 H111" stroke="#606020" stroke-width="3.2" opacity="0.7"/><path d="M101 83 H110" stroke="#f0f000" stroke-width="3.2"/><path d="M111 81 L116 86 M113 80 Q117 77 120 81 Q121 84 119 86" fill="none" stroke="#3a70d8" stroke-width="1.5"/>
<path d="M126 77 Q136 69 146 73.5 L145 76.5 Q136 77.8 126 77 Z" fill="#c4d4f6"/><circle cx="135.5" cy="74" r="3.4" fill="#3c5c94"/><circle cx="135.5" cy="73.6" r="1.4" fill="#101828"/><circle cx="135" cy="72.6" r="0.8" fill="#d8ecff"/><path d="M126 77 Q135 63.5 146.5 73 Q136 70 126 77 Z" fill="#1a2230" stroke="#1a2230" stroke-width="0.8"/><path d="M131 70 l-1 -1.6 M135 69 l0 -1.6 M139 69 l1 -1.6 M142.5 70 l2 -1.2 M145 72 l2 -0.5" stroke="#1a2230" stroke-width="1.1"/><path d="M126.5 77 L133 77.6" stroke="#b08898" stroke-width="1"/><rect x="128" y="72" width="6" height="15" rx="2" fill="#202020"/><rect x="139" y="72" width="6" height="15" rx="2" fill="#202020"/><circle cx="131" cy="77" r="2" fill="#e0d020"/><circle cx="131" cy="83" r="2" fill="#20c020"/><circle cx="142" cy="76" r="2" fill="#e02020"/><circle cx="142" cy="83" r="2" fill="#e0c020"/>
<path d="M152 77 Q162 69 172 73.5 L171 76.5 Q162 77.8 152 77 Z" fill="#c4d4f6"/><circle cx="161.5" cy="74" r="3.4" fill="#3c5c94"/><circle cx="161.5" cy="73.6" r="1.4" fill="#101828"/><circle cx="161" cy="72.6" r="0.8" fill="#d8ecff"/><path d="M152 77 Q161 63.5 172.5 73 Q162 70 152 77 Z" fill="#1a2230" stroke="#1a2230" stroke-width="0.8"/><path d="M157 70 l-1 -1.6 M161 69 l0 -1.6 M165 69 l1 -1.6 M168.5 70 l2 -1.2 M171 72 l2 -0.5" stroke="#1a2230" stroke-width="1.1"/><path d="M152.5 77 L159 77.6" stroke="#b08898" stroke-width="1"/><path d="M155 79 A7 6 0 0 1 168 75" fill="none" stroke="#40b030" stroke-width="3"/>
<path d="M165 71 L171 75 L165 78 Z" fill="#40b030"/>
<path d="M170 80 A7 6 0 0 1 157 84" fill="none" stroke="#e8d820" stroke-width="3"/>
<path d="M160 88 L154 84 L160 81 Z" fill="#e8d820"/>
<path d="M178 78 Q188 70 198 74.5 L197 77.5 Q188 78.8 178 78 Z" fill="#c4d4f6"/><circle cx="187.5" cy="75" r="3.4" fill="#3c5c94"/><circle cx="187.5" cy="74.6" r="1.4" fill="#101828"/><circle cx="187" cy="73.6" r="0.8" fill="#d8ecff"/><path d="M178 78 Q187 64.5 198.5 74 Q188 71 178 78 Z" fill="#1a2230" stroke="#1a2230" stroke-width="0.8"/><path d="M183 71 l-1 -1.6 M187 70 l0 -1.6 M191 70 l1 -1.6 M194.5 71 l2 -1.2 M197 73 l2 -0.5" stroke="#1a2230" stroke-width="1.1"/><path d="M178.5 78 L185 78.6" stroke="#b08898" stroke-width="1"/><path d="M179.5 82 H186.5 M183 78.5 V85.5" stroke="#505060" stroke-width="3.2" opacity="0.7"/><path d="M178.5 81 H185.5 M182 77.5 V84.5" stroke="#90f050" stroke-width="3.2"/><path d="M186 87 L190 79" stroke="#202020" stroke-width="1.3"/><path d="M189 85 H198" stroke="#606020" stroke-width="3.2" opacity="0.7"/><path d="M188 84 H197" stroke="#f0f000" stroke-width="3.2"/>
<path d="M204 78 Q214 70 224 74.5 L223 77.5 Q214 78.8 204 78 Z" fill="#c4d4f6"/><circle cx="213.5" cy="75" r="3.4" fill="#3c5c94"/><circle cx="213.5" cy="74.6" r="1.4" fill="#101828"/><circle cx="213" cy="73.6" r="0.8" fill="#d8ecff"/><path d="M204 78 Q213 64.5 224.5 74 Q214 71 204 78 Z" fill="#1a2230" stroke="#1a2230" stroke-width="0.8"/><path d="M209 71 l-1 -1.6 M213 70 l0 -1.6 M217 70 l1 -1.6 M220.5 71 l2 -1.2 M223 73 l2 -0.5" stroke="#1a2230" stroke-width="1.1"/><path d="M204.5 78 L211 78.6" stroke="#b08898" stroke-width="1"/><path d="M213.5 82.5 H223.5 M218.5 77.5 V87.5" stroke="#505060" stroke-width="3.2" opacity="0.7"/><path d="M212.5 81.5 H222.5 M217.5 76.5 V86.5" stroke="#90f050" stroke-width="3.2"/>
<path d="M230 78 Q240 70 250 74.5 L249 77.5 Q240 78.8 230 78 Z" fill="#c4d4f6"/><circle cx="239.5" cy="75" r="3.4" fill="#3c5c94"/><circle cx="239.5" cy="74.6" r="1.4" fill="#101828"/><circle cx="239" cy="73.6" r="0.8" fill="#d8ecff"/><path d="M230 78 Q239 64.5 250.5 74 Q240 71 230 78 Z" fill="#1a2230" stroke="#1a2230" stroke-width="0.8"/><path d="M235 71 l-1 -1.6 M239 70 l0 -1.6 M243 70 l1 -1.6 M246.5 71 l2 -1.2 M249 73 l2 -0.5" stroke="#1a2230" stroke-width="1.1"/><path d="M230.5 78 L237 78.6" stroke="#b08898" stroke-width="1"/><path d="M239 83 H250" stroke="#606020" stroke-width="3.2" opacity="0.7"/><path d="M238 82 H249" stroke="#f0f000" stroke-width="3.2"/>
<path d="M277 78 A7 7 0 0 1 290 74" fill="none" stroke="#4a80d0" stroke-width="3"/>
<path d="M287 70 L293 74 L287 77 Z" fill="#4a80d0"/>
<path d="M292 79 A7 7 0 0 1 279 83" fill="none" stroke="#4a80d0" stroke-width="3"/>
<path d="M282 87 L276 83 L282 80 Z" fill="#4a80d0"/>
<path d="M305 73 V84 A5.5 2.5 0 0 0 316 84 V73" fill="none" stroke="#333" stroke-width="1"/>
<ellipse cx="310.5" cy="73" rx="5.5" ry="2.5" fill="none" stroke="#333" stroke-width="1"/>
<path d="M305 82 A5.5 2.5 0 0 0 316 82" fill="none" stroke="#333" stroke-width="0.6" stroke-dasharray="1 1"/>
<path d="M331 73 V84 A5.5 2.5 0 0 0 342 84 V73" fill="none" stroke="#333" stroke-width="1"/>
<ellipse cx="336.5" cy="73" rx="5.5" ry="2.5" fill="none" stroke="#333" stroke-width="1"/>
<path d="M331 82 A5.5 2.5 0 0 0 342 82" fill="none" stroke="#333" stroke-width="0.6" stroke-dasharray="1 1"/>
<path d="M357 73 V84 A5.5 2.5 0 0 0 368 84 V73" fill="none" stroke="#333" stroke-width="1"/>
<ellipse cx="362.5" cy="73" rx="5.5" ry="2.5" fill="none" stroke="#333" stroke-width="1"/>
<path d="M357 82 A5.5 2.5 0 0 0 368 82" fill="none" stroke="#333" stroke-width="0.6" stroke-dasharray="1 1"/>
<path d="M383 73 V84 A5.5 2.5 0 0 0 394 84 V73 Z" fill="url(#gBlue)" stroke="#40e0f0" stroke-width="1"/>
<ellipse cx="388.5" cy="73" rx="5.5" ry="2.5" fill="#8ab0e8" stroke="#40e0f0" stroke-width="1"/>
<ellipse cx="391" cy="86.5" rx="6" ry="1.5" fill="#000" opacity="0.18"/>
<rect x="401" y="66" width="24" height="24" fill="#fde27a" stroke="#e0c060" stroke-width="0.8"/>
<path d="M408 73 V84 A5.5 2.5 0 0 0 419 84 V73 Z" fill="url(#gBlue)" stroke="#203060" stroke-width="1"/>
<ellipse cx="413.5" cy="73" rx="5.5" ry="2.5" fill="#8ab0e8" stroke="#203060" stroke-width="1"/>
<ellipse cx="416" cy="86.5" rx="6" ry="1.5" fill="#000" opacity="0.18"/>
<path d="M435 73 V84 A5.5 2.5 0 0 0 446 84 V73" fill="#d8e8f0" stroke="#40e0f0" stroke-width="1"/>
<ellipse cx="440.5" cy="73" rx="5.5" ry="2.5" fill="#d8e8f0" stroke="#40e0f0" stroke-width="1"/>
<path d="M435 82 A5.5 2.5 0 0 0 446 82" fill="none" stroke="#40e0f0" stroke-width="0.6" stroke-dasharray="1 1"/>
<path d="M461 73 V84 A5.5 2.5 0 0 0 472 84 V73" fill="#d0e0f0" stroke="#404850" stroke-width="1"/>
<ellipse cx="466.5" cy="73" rx="5.5" ry="2.5" fill="#d0e0f0" stroke="#404850" stroke-width="1"/>
<path d="M461 82 A5.5 2.5 0 0 0 472 82" fill="none" stroke="#404850" stroke-width="0.6" stroke-dasharray="1 1"/>
<path d="M487 73 V84 A5.5 2.5 0 0 0 498 84 V73" fill="#e0e0e0" stroke="#333" stroke-width="1"/>
<ellipse cx="492.5" cy="73" rx="5.5" ry="2.5" fill="#e0e0e0" stroke="#333" stroke-width="1"/>
<path d="M487 82 A5.5 2.5 0 0 0 498 82" fill="none" stroke="#333" stroke-width="0.6" stroke-dasharray="1 1"/><path d="M489 75 L494 83 M492 74 L489 84" stroke="#333" stroke-width="0.8"/>
<path d="M509 71 V82 A5.5 2.5 0 0 0 520 82 V71" fill="#f0f0f0" stroke="#555" stroke-width="1"/>
<ellipse cx="514.5" cy="71" rx="5.5" ry="2.5" fill="#f0f0f0" stroke="#555" stroke-width="1"/>
<path d="M509 80 A5.5 2.5 0 0 0 520 80" fill="none" stroke="#555" stroke-width="0.6" stroke-dasharray="1 1"/><path d="M515 75 V86 A5.5 2.5 0 0 0 526 86 V75 Z" fill="url(#gBlue)" stroke="#203060" stroke-width="1"/>
<ellipse cx="520.5" cy="75" rx="5.5" ry="2.5" fill="#8ab0e8" stroke="#203060" stroke-width="1"/>
<ellipse cx="523" cy="88.5" rx="6" ry="1.5" fill="#000" opacity="0.18"/><path d="M520 67 l3 3 l-3 3 z M507 85 l3 3 l-3 0 z" fill="#30b030"/>
<path d="M535 73 V84 A5.5 2.5 0 0 0 546 84 V73 Z" fill="url(#gBlue)" stroke="#203060" stroke-width="1"/>
<ellipse cx="540.5" cy="73" rx="5.5" ry="2.5" fill="#8ab0e8" stroke="#203060" stroke-width="1"/>
<ellipse cx="543" cy="86.5" rx="6" ry="1.5" fill="#000" opacity="0.18"/><g transform="translate(541 75) scale(0.55)"><path d="M3 10 A7 7 0 0 1 16 6" fill="none" stroke="#3a78d8" stroke-width="3"/>
<path d="M13 2 L19 6 L13 9 Z" fill="#3a78d8"/>
<path d="M18 11 A7 7 0 0 1 5 15" fill="none" stroke="#3a78d8" stroke-width="3"/>
<path d="M8 19 L2 15 L8 12 Z" fill="#3a78d8"/></g>
<rect x="561" y="70" width="17" height="14" fill="#9098a8" stroke="#506080" stroke-width="0.8"/><path d="M563 85 L576 71 M566 71 L578 84" stroke="#e0e0f0" stroke-width="2.5"/><path d="M563 85 L570 78" stroke="#3070d0" stroke-width="2.5"/>
<path d="M603 71 L608 69 L613 71 L608 73 Z" fill="#c8c8c8" stroke="#303030" stroke-width="0.7"/><path d="M603 71 V78 L608 80 V73 Z" fill="#8a8a8a" stroke="#303030" stroke-width="0.7"/><path d="M613 71 V78 L608 80 V73 Z" fill="#a8a8a8" stroke="#303030" stroke-width="0.7"/><path d="M611 71 L616 69 L621 71 L616 73 Z" fill="#f4f4f4" stroke="#303030" stroke-width="0.7"/><path d="M611 71 V78 L616 80 V73 Z" fill="#d8d8d8" stroke="#303030" stroke-width="0.7"/><path d="M621 71 V78 L616 80 V73 Z" fill="#ffffff" stroke="#303030" stroke-width="0.7"/><path d="M603.0 83 H613.0 M608 78.0 V88.0" stroke="#505060" stroke-width="3.2" opacity="0.7"/><path d="M602.0 82 H612.0 M607 77.0 V87.0" stroke="#90f050" stroke-width="3.2"/><path d="M613 79 L618 84 M615 78 Q619 75 622 79 Q623 82 621 84" fill="none" stroke="#3a70d8" stroke-width="1.5"/>
<path d="M629 71 L634 69 L639 71 L634 73 Z" fill="#c8c8c8" stroke="#303030" stroke-width="0.7"/><path d="M629 71 V78 L634 80 V73 Z" fill="#8a8a8a" stroke="#303030" stroke-width="0.7"/><path d="M639 71 V78 L634 80 V73 Z" fill="#a8a8a8" stroke="#303030" stroke-width="0.7"/><path d="M637 71 L642 69 L647 71 L642 73 Z" fill="#f4f4f4" stroke="#303030" stroke-width="0.7"/><path d="M637 71 V78 L642 80 V73 Z" fill="#d8d8d8" stroke="#303030" stroke-width="0.7"/><path d="M647 71 V78 L642 80 V73 Z" fill="#ffffff" stroke="#303030" stroke-width="0.7"/><rect x="629" y="76" width="6" height="12" rx="2" fill="#202020"/><rect x="638" y="76" width="6" height="12" rx="2" fill="#202020"/><circle cx="632" cy="80" r="1.8" fill="#e0d020"/><circle cx="632" cy="85" r="1.8" fill="#20c020"/><circle cx="641" cy="80" r="1.8" fill="#e02020"/><circle cx="641" cy="85" r="1.8" fill="#e0c020"/>
<path d="M655 71 L660 69 L665 71 L660 73 Z" fill="#c8c8c8" stroke="#303030" stroke-width="0.7"/><path d="M655 71 V78 L660 80 V73 Z" fill="#8a8a8a" stroke="#303030" stroke-width="0.7"/><path d="M665 71 V78 L660 80 V73 Z" fill="#a8a8a8" stroke="#303030" stroke-width="0.7"/><path d="M663 71 L668 69 L673 71 L668 73 Z" fill="#f4f4f4" stroke="#303030" stroke-width="0.7"/><path d="M663 71 V78 L668 80 V73 Z" fill="#d8d8d8" stroke="#303030" stroke-width="0.7"/><path d="M673 71 V78 L668 80 V73 Z" fill="#ffffff" stroke="#303030" stroke-width="0.7"/><path d="M657 80 A7 6 0 0 1 670 76" fill="none" stroke="#40b030" stroke-width="3"/>
<path d="M667 72 L673 76 L667 79 Z" fill="#40b030"/>
<path d="M672 81 A7 6 0 0 1 659 85" fill="none" stroke="#e8d820" stroke-width="3"/>
<path d="M662 89 L656 85 L662 82 Z" fill="#e8d820"/>
<path d="M681 71 L686 69 L691 71 L686 73 Z" fill="#c8c8c8" stroke="#303030" stroke-width="0.7"/><path d="M681 71 V78 L686 80 V73 Z" fill="#8a8a8a" stroke="#303030" stroke-width="0.7"/><path d="M691 71 V78 L686 80 V73 Z" fill="#a8a8a8" stroke="#303030" stroke-width="0.7"/><path d="M689 71 L694 69 L699 71 L694 73 Z" fill="#f4f4f4" stroke="#303030" stroke-width="0.7"/><path d="M689 71 V78 L694 80 V73 Z" fill="#d8d8d8" stroke="#303030" stroke-width="0.7"/><path d="M699 71 V78 L694 80 V73 Z" fill="#ffffff" stroke="#303030" stroke-width="0.7"/><path d="M682.5 80 H689.5 M686 76.5 V83.5" stroke="#505060" stroke-width="3.2" opacity="0.7"/><path d="M681.5 79 H688.5 M685 75.5 V82.5" stroke="#90f050" stroke-width="3.2"/><path d="M688 87 L692 79" stroke="#202020" stroke-width="1.3"/><path d="M691 86 H700" stroke="#606020" stroke-width="3.2" opacity="0.7"/><path d="M690 85 H699" stroke="#f0f000" stroke-width="3.2"/>
<path d="M712 73 V84 A5.5 2.5 0 0 0 723 84 V73 Z" fill="url(#gBlue)" stroke="#203060" stroke-width="1"/>
<ellipse cx="717.5" cy="73" rx="5.5" ry="2.5" fill="#8ab0e8" stroke="#203060" stroke-width="1"/>
<ellipse cx="720" cy="86.5" rx="6" ry="1.5" fill="#000" opacity="0.18"/><path d="M717.5 74 V86" stroke="#fff" stroke-width="0.8" stroke-dasharray="2 1"/>
<path d="M738 73 V84 A5.5 2.5 0 0 0 749 84 V73 Z" fill="#c8d0e8" stroke="#203060" stroke-width="1"/>
<ellipse cx="743.5" cy="73" rx="5.5" ry="2.5" fill="#8ab0e8" stroke="#203060" stroke-width="1"/>
<ellipse cx="746" cy="86.5" rx="6" ry="1.5" fill="#000" opacity="0.18"/><path d="M741 73 V86 M744 73 V86" stroke="#e0e020" stroke-width="1.5"/>
<path d="M764 73 V84 A5.5 2.5 0 0 0 775 84 V73" fill="#d0f0f8" stroke="#40e0f0" stroke-width="1"/>
<ellipse cx="769.5" cy="73" rx="5.5" ry="2.5" fill="#d0f0f8" stroke="#40e0f0" stroke-width="1"/>
<path d="M764 82 A5.5 2.5 0 0 0 775 82" fill="none" stroke="#40e0f0" stroke-width="0.6" stroke-dasharray="1 1"/><path d="M764 77 L768 83 L775 72" fill="none" stroke="#30b030" stroke-width="2.5"/>
<path d="M788 74 V85 A5.5 2.5 0 0 0 799 85 V74" fill="#e0f0f8" stroke="#40e0f0" stroke-width="1"/>
<ellipse cx="793.5" cy="74" rx="5.5" ry="2.5" fill="#e0f0f8" stroke="#40e0f0" stroke-width="1"/>
<path d="M788 83 A5.5 2.5 0 0 0 799 83" fill="none" stroke="#40e0f0" stroke-width="0.6" stroke-dasharray="1 1"/><rect x="796" y="67" width="7" height="7" fill="#f0b040" stroke="#d08010" stroke-width="0.6"/>
<path d="M815 73 V84 A5.5 2.5 0 0 0 826 84 V73" fill="none" stroke="#60a0e0" stroke-width="1"/>
<ellipse cx="820.5" cy="73" rx="5.5" ry="2.5" fill="none" stroke="#60a0e0" stroke-width="1"/>
<path d="M815 82 A5.5 2.5 0 0 0 826 82" fill="none" stroke="#60a0e0" stroke-width="0.6" stroke-dasharray="1 1"/><path d="M817 75 L822 83 M820 74 L817 84" stroke="#60a0e0" stroke-width="0.8"/>
<path d="M838 73 L847 69 L856 73 L855 81 L847 87 L839 81 Z" fill="#1c3c90" stroke="#0c1c40" stroke-width="0.8"/><path d="M838 73 L847 69 L856 73 L847 77 Z" fill="#80a8f0"/><path d="M839 74 L847 77 L847 86 L840 81 Z" fill="#3a68c8"/>
<circle cx="886" cy="76" r="5" fill="#c0d8f0" stroke="#808890" stroke-width="1.5"/><path d="M882 80 L877 86" stroke="#909090" stroke-width="2.5"/><path d="M890 79 L897 76 V85 L890 88 Z" fill="#505050"/><path d="M878 69 H882 M880 67 V71" stroke="#000" stroke-width="0.8"/>
<circle cx="913" cy="76" r="5" fill="#c0d8f0" stroke="#808890" stroke-width="1.5"/><path d="M909 80 L905 86" stroke="#909090" stroke-width="2.5"/><path d="M917 79 L923 76 V85 L917 88 Z" fill="#505050"/><path d="M905 69 l3 3 M924 69 l-3 3 M905 87 l3 -3" stroke="#30c030" stroke-width="1.6"/>
<rect x="933" y="71" width="14" height="13" fill="#f0f4f8" stroke="#000" stroke-width="0.8"/><text x="940" y="81" font-size="7" text-anchor="middle" font-family="Liberation Sans" fill="#000">1:1</text><path d="M931 69 l3 3 M949 69 l-3 3 M931 86 l3 -3 M949 86 l-3 -3" stroke="#30c030" stroke-width="1.6"/>
<path d="M960 84 L973 71" stroke="#30b030" stroke-width="2.2"/><path d="M967 70 H975 V78 Z" fill="#30b030"/><circle cx="960" cy="84" r="2.5" fill="#808080"/>
<path d="M986 78 A7 6 0 0 1 999 74" fill="none" stroke="#40b030" stroke-width="3"/>
<path d="M996 70 L1002 74 L996 77 Z" fill="#40b030"/>
<path d="M1001 79 A7 6 0 0 1 988 83" fill="none" stroke="#30a030" stroke-width="3"/>
<path d="M991 87 L985 83 L991 80 Z" fill="#30a030"/>
<path d="M1009 76 Q1019 68 1029 72.5 L1028 75.5 Q1019 76.8 1009 76 Z" fill="#c4d4f6"/><circle cx="1018.5" cy="73" r="3.4" fill="#3c5c94"/><circle cx="1018.5" cy="72.6" r="1.4" fill="#101828"/><circle cx="1018" cy="71.6" r="0.8" fill="#d8ecff"/><path d="M1009 76 Q1018 62.5 1029.5 72 Q1019 69 1009 76 Z" fill="#1a2230" stroke="#1a2230" stroke-width="0.8"/><path d="M1014 69 l-1 -1.6 M1018 68 l0 -1.6 M1022 68 l1 -1.6 M1025.5 69 l2 -1.2 M1028 71 l2 -0.5" stroke="#1a2230" stroke-width="1.1"/><path d="M1009.5 76 L1016 76.6" stroke="#b08898" stroke-width="1"/><circle cx="1019" cy="79" r="6" fill="#f8d840" stroke="#c09010" stroke-width="0.6"/><circle cx="1017" cy="78" r="0.9" fill="#000"/><circle cx="1021" cy="78" r="0.9" fill="#000"/><path d="M1016 81 Q1019 83 1022 81" fill="none" stroke="#000" stroke-width="0.7"/>
<path d="M1053 79 L1062 74 L1071 79 L1062 85 Z" fill="#dde6f4" stroke="#8090a8" stroke-width="0.8"/><path d="M1058 80 V69" stroke="#2060e0" stroke-width="1.5"/><path d="M1056 70 l2 -3 l2 3z" fill="#2060e0"/><path d="M1058 80 L1066 73" stroke="#30b030" stroke-width="1.5"/><path d="M1058 80 L1066 86" stroke="#e02020" stroke-width="1.5"/><circle cx="1058" cy="80" r="1.8" fill="#808080"/>
<path d="M1086 76 L1097 71 L1098 76 L1087 81 Z" fill="#dde6f4" stroke="#8090a8" stroke-width="0.8"/><rect x="1086" y="81" width="12" height="6" fill="#e0e0e0" stroke="#707070" stroke-width="0.8"/><path d="M1090 79 V69" stroke="#2060e0" stroke-width="1.3"/><path d="M1080 86 L1088 78" stroke="#30b030" stroke-width="2.5"/><path d="M1090 79 L1096 83" stroke="#e02020" stroke-width="1.2"/>
<path d="M1110 76 L1121 71 L1124 75 L1113 80 Z" fill="#dde6f4" stroke="#8090a8" stroke-width="0.8"/><path d="M1116 77 V68" stroke="#2060e0" stroke-width="1.3"/><path d="M1105 87 L1113 79" stroke="#30b030" stroke-width="2.5"/><path d="M1106 79 L1111 84" stroke="#30b030" stroke-width="2.2"/><path d="M1116 77 L1121 80" stroke="#e02020" stroke-width="1.2"/>
<rect x="1147.0" y="69.0" width="6.2" height="5.8" fill="#00d8f0"/><rect x="1153.7" y="69.0" width="6.2" height="5.8" fill="#f0e000"/><rect x="1160.4" y="69.0" width="6.2" height="5.8" fill="#10e010"/><rect x="1147.0" y="75.3" width="6.2" height="5.8" fill="#f08000"/><rect x="1153.7" y="75.3" width="6.2" height="5.8" fill="#a06000"/><rect x="1160.4" y="75.3" width="6.2" height="5.8" fill="#f000f0"/><rect x="1147.0" y="81.6" width="6.2" height="5.8" fill="#0010f0"/><rect x="1153.7" y="81.6" width="6.2" height="5.8" fill="#10a030"/><rect x="1160.4" y="81.6" width="6.2" height="5.8" fill="#808080"/>
<rect x="1175" y="68" width="16" height="19" fill="#f0f4fa" stroke="#506080" stroke-width="0.8"/><rect x="1176" y="69" width="14" height="2" fill="#60a0e0"/><rect x="1178" y="77.0" width="3.4" height="2.8" fill="#00d8f0"/><rect x="1182" y="77.0" width="3.4" height="2.8" fill="#f0e000"/><rect x="1186" y="77.0" width="3.4" height="2.8" fill="#10e010"/><rect x="1178" y="80.2" width="3.4" height="2.8" fill="#f08000"/><rect x="1182" y="80.2" width="3.4" height="2.8" fill="#a06000"/><rect x="1186" y="80.2" width="3.4" height="2.8" fill="#f000f0"/><rect x="1178" y="83.4" width="3.4" height="2.8" fill="#0010f0"/><rect x="1182" y="83.4" width="3.4" height="2.8" fill="#10a030"/><rect x="1186" y="83.4" width="3.4" height="2.8" fill="#808080"/>
<circle cx="1209" cy="78" r="9.5" fill="#5a9040" stroke="#406030" stroke-width="1"/><path d="M1203 84 L1215 72" stroke="#3070c0" stroke-width="2.5"/><path d="M1204 72 L1215 84" stroke="#e0e0e0" stroke-width="2.5"/>
<rect x="1225" y="68" width="20" height="20" fill="#dce8f6" stroke="#405060" stroke-width="0.8"/><rect x="1225" y="68" width="20" height="3" fill="#3070c0"/><path d="M1229 86 L1243 74 M1232 74 L1243 86" stroke="#7090b0" stroke-width="2"/><path d="M1228 74 V85" stroke="#c06020" stroke-width="1.5" stroke-dasharray="1.5 1.5"/>
<path d="M1252 69 H1271 M1252 87 H1271 M1252 69 V87 M1271 69 V87" stroke="#203050" stroke-width="1.2" stroke-dasharray="1.2 2"/><path d="M1257 79 Q1262 69 1271 71 L1270 78 Q1264 77 1260 81 Z" fill="#e8b060" stroke="#906020" stroke-width="0.6"/><circle cx="1257" cy="82" r="3.5" fill="#f0e040" stroke="#3070c0" stroke-width="1"/>
<path d="M1282 70 L1296 69 L1291 86 L1278 87 Z" fill="#c02030" stroke="#2050d0" stroke-width="1.5"/><path d="M1284 75 L1293 74 M1282 80 L1292 79 M1286 70 L1281 87 M1291 70 L1286 87" stroke="#f0a0a0" stroke-width="0.8"/>
<circle cx="20" cy="142" r="5.5" fill="#c8def0" stroke="#8098b0" stroke-width="1.5"/><path d="M16 146 L11 152" stroke="#a0a0a0" stroke-width="2.5"/><path d="M9 139 h5 M10 143 h4" stroke="#b0b8c8" stroke-width="1.2"/>
<path d="M39 151 L50 138 L53 140 L42 153 Z" fill="#e0a040" stroke="#604010" stroke-width="0.7"/><path d="M50 138 L53 140" stroke="#e03030" stroke-width="2"/><path d="M39 151 L38 154 L42 153" fill="#303030"/><path d="M37 137 L52 153" stroke="#3070d0" stroke-width="1.3" stroke-dasharray="2 1.5"/><path d="M48 133 h6 l-3 3 z" fill="#000"/>
<rect x="12" y="163" width="13" height="11" fill="url(#gLBlue)" stroke="#505050" stroke-width="0.8"/><path d="M9 160 l4 4 M13 160 l-4 4" stroke="#30c030" stroke-width="1.6"/><path d="M24 160 l4 4 M28 160 l-4 4" stroke="#30c030" stroke-width="1.6"/><path d="M9 173 l4 4 M13 173 l-4 4" stroke="#30c030" stroke-width="1.6"/><path d="M24 173 l4 4 M28 173 l-4 4" stroke="#30c030" stroke-width="1.6"/>
<path d="M45 163 A5 5 0 1 0 43 172 A5 5 0 1 1 49 177" fill="none" stroke="#3070d0" stroke-width="1.6"/><path d="M39 176 L50 163 L53 165 L42 178 Z" fill="#e0a040" stroke="#604010" stroke-width="0.7"/><path d="M50 163 L53 165" stroke="#e03030" stroke-width="2"/><path d="M39 176 L38 179 L42 178" fill="#303030"/><path d="M48 158 h6 l-3 3 z" fill="#000"/>
<path d="M9 189 h4 M11 187 v4 M9 193 h4" stroke="#000" stroke-width="0.8"/><circle cx="20" cy="193" r="5.5" fill="#c8def0" stroke="#8098b0" stroke-width="1.5"/><path d="M16 197 L11 203" stroke="#a0a0a0" stroke-width="2.5"/><path d="M21 197 L27 195 V203 L21 205 Z" fill="#606060"/><path d="M22 184 h6 l-3 3 z" fill="#000"/>
<path d="M37 187 H51 V195 H47 V203 H37 Z" fill="none" stroke="#f0e000" stroke-width="1.8"/><path d="M40 195 L44 200 L51 190" fill="none" stroke="#50c040" stroke-width="3"/><path d="M48 184 h6 l-3 3 z" fill="#000"/>
<path d="M9 222 L19 216 L28 222 L19 229 Z" fill="#dde6f4" stroke="#8090a8" stroke-width="0.8"/><path d="M15 223 V212" stroke="#2060e0" stroke-width="1.5"/><path d="M15 223 L24 217" stroke="#30b030" stroke-width="1.5"/><path d="M15 223 L24 229" stroke="#e02020" stroke-width="1.5"/><circle cx="15" cy="223" r="2" fill="#909090"/><path d="M22 209 h6 l-3 3 z" fill="#000"/>
<path d="M36 223 Q38 209 43 219 Q48 231 52 219" fill="none" stroke="#3070d0" stroke-width="1.6"/><path d="M39 227 L50 214 L53 216 L42 229 Z" fill="#e0a040" stroke="#604010" stroke-width="0.7"/><path d="M50 214 L53 216" stroke="#e03030" stroke-width="2"/><path d="M39 227 L38 230 L42 229" fill="#303030"/><path d="M48 209 h6 l-3 3 z" fill="#000"/>
<path d="M10 240 H21 L23 243 H12 Z" fill="#8090e0"/>
<path d="M10 244 H21 L23 247 H12 Z" fill="#c0c8e8" stroke="#808080" stroke-width="0.5"/>
<ellipse cx="21" cy="252" rx="8" ry="4.5" fill="#c09070" stroke="#604030" stroke-width="0.6"/>
<circle cx="18" cy="253" r="2" fill="#2040f0"/><circle cx="22" cy="253" r="2" fill="#20b020"/><circle cx="25" cy="250" r="1.8" fill="#e02020"/>
<path d="M20 248 L28 238" stroke="#a06020" stroke-width="1.8"/><path d="M22 235 h6 l-3 3 z" fill="#000"/>
<path d="M40 239 L53 238 L49 255 L36 255 Z" fill="#9cc8f0" stroke="#2060c0" stroke-width="1.4"/><path d="M46 239 L43 255 M38 247 L51 246" stroke="#f0f8ff" stroke-width="1.2"/><path d="M48 235 h6 l-3 3 z" fill="#000"/>
<path d="M12 273 A7 7 0 0 1 25 269" fill="none" stroke="#5a90d8" stroke-width="3"/>
<path d="M22 265 L28 269 L22 272 Z" fill="#5a90d8"/>
<path d="M27 274 A7 7 0 0 1 14 278" fill="none" stroke="#5a90d8" stroke-width="3"/>
<path d="M17 282 L11 278 L17 275 Z" fill="#5a90d8"/><path d="M22 261 h6 l-3 3 z" fill="#000"/>
<path d="M37 268 L44 265 L52 268 L45 271 Z" fill="#d0d0d0" stroke="#404040" stroke-width="0.7"/><path d="M37 268 V277 L45 281 V271 Z" fill="#a8a8a8" stroke="#404040" stroke-width="0.7"/><path d="M52 268 V277 L45 281 V271 Z" fill="#707070" stroke="#404040" stroke-width="0.7"/><path d="M48 261 h6 l-3 3 z" fill="#000"/>
<text x="18" y="305" font-family="Liberation Sans" font-weight="bold" font-size="18" text-anchor="middle" fill="#4070c8">?</text><ellipse cx="19" cy="307" rx="6" ry="1.5" fill="#000" opacity="0.2"/><path d="M22 287 h6 l-3 3 z" fill="#000"/>
<path d="M37 292 V307 M52 292 V307" stroke="#505050" stroke-width="1.3"/><path d="M38 295 H51" stroke="#e0d000" stroke-width="1.3"/><path d="M38 295 l3 -2 v4 z M51 295 l-3 -2 v4 z" fill="#303030"/><path d="M48 287 h6 l-3 3 z" fill="#000"/>
<path d="M12 320 H26 L24 333 H14 Z" fill="#a8d8e8" stroke="#507080" stroke-width="0.8"/><rect x="16" y="316" width="6" height="4" fill="#f0d020"/><path d="M16 324 l4 5 l3 -4" stroke="#70b040" stroke-width="1.2" fill="none"/><path d="M22 313 h6 l-3 3 z" fill="#000"/>
<path d="M50 332 Q52 320 43 321 L43 317 L37 323 L43 328 L43 324 Q48 324 47 332 Z" fill="#a8a8a8" stroke="#888" stroke-width="0.5"/><path d="M48 313 h6 l-3 3 z" fill="#000"/>
<rect x="10" y="343" width="3" height="16" fill="#505050"/><circle cx="20" cy="350" r="6" fill="none" stroke="#a06030" stroke-width="1.5"/><path d="M20 343 v14 M13 350 h14" stroke="#a06030" stroke-width="1"/><path d="M12 358 L27 353 M12 355 L25 351" stroke="#f08020" stroke-width="2"/><path d="M22 339 h6 l-3 3 z" fill="#000"/>
<rect x="40" y="349" width="13" height="10" fill="#fff" stroke="#303030" stroke-width="0.8"/><path d="M36 345 H42 L44 347 H50 L48 355 H37 Z" fill="url(#gFolder)" stroke="#a08030" stroke-width="0.6"/><path d="M41 347 Q45 341 49 344" stroke="#30a030" stroke-width="2" fill="none"/>
<rect x="64" y="113" width="24" height="24" fill="#7f8298"/>
<rect x="92" y="113" width="24" height="24" fill="#7f8298"/>
<rect x="120" y="113" width="24" height="24" fill="#7f8298"/>
<rect x="148" y="113" width="24" height="24" fill="#7f8298"/>
<rect x="176" y="113" width="24" height="24" fill="#7f8298"/>
<rect x="204" y="113" width="24" height="24" fill="#7f8298"/>
<rect x="232" y="113" width="24" height="24" fill="#7f8298"/>
<rect x="260" y="113" width="24" height="24" fill="#7f8298"/>
<rect x="288" y="113" width="24" height="24" fill="#7f8298"/>
<rect x="316" y="113" width="24" height="24" fill="#7f8298"/>
<rect x="344" y="113" width="24" height="24" fill="#7f8298"/>
<rect x="64" y="141" width="24" height="24" fill="#7f8298"/>
<rect x="64" y="169" width="24" height="24" fill="#7f8298"/>
<rect x="64" y="197" width="24" height="24" fill="#7f8298"/>
<rect x="64" y="225" width="24" height="24" fill="#7f8298"/>
<rect x="64" y="253" width="24" height="24" fill="#7f8298"/>
<rect x="64.5" y="197.5" width="23" height="23" fill="#d8c070" stroke="#e8d890" stroke-width="1"/><rect x="66" y="199" width="20" height="20" fill="#8a8aa0"/>
<rect x="67" y="118" width="18" height="3.5" rx="1" fill="#3c5490"/><rect x="67" y="124" width="18" height="3.5" rx="1" fill="#3c5490"/><rect x="67" y="130" width="18" height="3.5" rx="1" fill="#3c5490"/>
<rect x="98" y="119" width="12" height="12" fill="url(#gLBlue)"/><path d="M94 115 l4 4 M98 115 l-4 4" stroke="#30c030" stroke-width="1.6"/><path d="M110 115 l4 4 M114 115 l-4 4" stroke="#30c030" stroke-width="1.6"/><path d="M94 131 l4 4 M98 131 l-4 4" stroke="#30c030" stroke-width="1.6"/><path d="M110 131 l4 4 M114 131 l-4 4" stroke="#30c030" stroke-width="1.6"/>
<circle cx="133" cy="124" r="5.5" fill="#c8def0" stroke="#8098b0" stroke-width="1.5"/><path d="M129 128 L125 134" stroke="#a0a0a0" stroke-width="2.5"/><path d="M123 119 h5 M124 123 h4" stroke="#b0b8c8" stroke-width="1.2"/>
<path d="M150 128 L159 123 L169 128 L159 134 Z" fill="none" stroke="#606070" stroke-width="0.6"/><path d="M158 129 V115" stroke="#2060e0" stroke-width="1.5"/><path d="M156 117 l2 -3 l2 3z" fill="#2060e0"/><path d="M158 129 L166 123" stroke="#30b030" stroke-width="1.3"/><path d="M158 129 L165 135" stroke="#e02020" stroke-width="1.8"/><circle cx="158" cy="129" r="1.8" fill="#ddd"/>
<path d="M179.5 119.5 L188 116 M188 116 L196.5 119.5 M196.5 119.5 L188 123 M188 123 L179.5 119.5 M179.5 129.5 L188 133.5 M188 133.5 L196.5 129.5 M179.5 129.5 L188 126 M188 126 L196.5 129.5 M179.5 119.5 L179.5 129.5 M196.5 119.5 L196.5 129.5 M188 123 L188 133.5 M188 116 L188 126" fill="none" stroke="#000" stroke-width="1.4" stroke-linecap="round"/><path d="M179.5 119.5 L188 116 L196.5 119.5 L188 123 Z" fill="#50d038" stroke="#000" stroke-width="1.4" stroke-linejoin="round"/>
<path d="M207.5 129.5 L216 126 L224.5 129.5 L216 133.5 Z" fill="#50d038"/><path d="M207.5 119.5 L216 116 M216 116 L224.5 119.5 M224.5 119.5 L216 123 M216 123 L207.5 119.5 M207.5 129.5 L216 133.5 M216 133.5 L224.5 129.5 M207.5 129.5 L216 126 M216 126 L224.5 129.5 M207.5 119.5 L207.5 129.5 M224.5 119.5 L224.5 129.5 M216 123 L216 133.5 M216 116 L216 126" fill="none" stroke="#000" stroke-width="1.4" stroke-linecap="round"/>
<path d="M235.5 119.5 L244 116 L244 126 L235.5 129.5 Z" fill="#50d038"/><path d="M235.5 119.5 L244 116 M244 116 L252.5 119.5 M252.5 119.5 L244 123 M244 123 L235.5 119.5 M235.5 129.5 L244 133.5 M244 133.5 L252.5 129.5 M235.5 129.5 L244 126 M244 126 L252.5 129.5 M235.5 119.5 L235.5 129.5 M252.5 119.5 L252.5 129.5 M244 123 L244 133.5 M244 116 L244 126" fill="none" stroke="#000" stroke-width="1.4" stroke-linecap="round"/>
<path d="M263.5 119.5 L272 116 M272 116 L280.5 119.5 M280.5 119.5 L272 123 M272 123 L263.5 119.5 M263.5 129.5 L272 133.5 M272 133.5 L280.5 129.5 M263.5 129.5 L272 126 M272 126 L280.5 129.5 M263.5 119.5 L263.5 129.5 M280.5 119.5 L280.5 129.5 M272 123 L272 133.5 M272 116 L272 126" fill="none" stroke="#000" stroke-width="1.4" stroke-linecap="round"/><path d="M272 123 L280.5 119.5 L280.5 129.5 L272 133.5 Z" fill="#50d038" stroke="#000" stroke-width="1.4" stroke-linejoin="round"/>
<path d="M291.5 119.5 L300 116 M300 116 L308.5 119.5 M308.5 119.5 L300 123 M300 123 L291.5 119.5 M291.5 129.5 L300 133.5 M300 133.5 L308.5 129.5 M291.5 129.5 L300 126 M300 126 L308.5 129.5 M291.5 119.5 L291.5 129.5 M308.5 119.5 L308.5 129.5 M300 123 L300 133.5 M300 116 L300 126" fill="none" stroke="#000" stroke-width="1.4" stroke-linecap="round"/><path d="M291.5 119.5 L300 123 L300 133.5 L291.5 129.5 Z" fill="#50d038" stroke="#000" stroke-width="1.4" stroke-linejoin="round"/>
<path d="M328 116 L336.5 119.5 L336.5 129.5 L328 126 Z" fill="#50d038"/><path d="M319.5 119.5 L328 116 M328 116 L336.5 119.5 M336.5 119.5 L328 123 M328 123 L319.5 119.5 M319.5 129.5 L328 133.5 M328 133.5 L336.5 129.5 M319.5 129.5 L328 126 M328 126 L336.5 129.5 M319.5 119.5 L319.5 129.5 M336.5 119.5 L336.5 129.5 M328 123 L328 133.5 M328 116 L328 126" fill="none" stroke="#000" stroke-width="1.4" stroke-linecap="round"/>
<path d="M347.5 119.5 L356 116 L364.5 119.5 L356 123 Z" fill="#70e050"/><path d="M347.5 119.5 L356 123 L356 133.5 L347.5 129.5 Z" fill="#40c030"/><path d="M356 123 L364.5 119.5 L364.5 129.5 L356 133.5 Z" fill="#28a828"/><path d="M347.5 119.5 L356 116 L364.5 119.5 L356 123 Z M347.5 119.5 L347.5 129.5 L356 133.5 L364.5 129.5 L364.5 119.5 M356 123 L356 133.5" fill="none" stroke="#108010" stroke-width="1"/>
<path d="M71 148 V159 A5.5 2.5 0 0 0 82 159 V148" fill="none" stroke="#303030" stroke-width="1"/>
<ellipse cx="76.5" cy="148" rx="5.5" ry="2.5" fill="none" stroke="#303030" stroke-width="1"/>
<path d="M71 157 A5.5 2.5 0 0 0 82 157" fill="none" stroke="#303030" stroke-width="0.6" stroke-dasharray="1 1"/>
<path d="M71 176 V187 A5.5 2.5 0 0 0 82 187 V176" fill="none" stroke="#303030" stroke-width="1"/>
<ellipse cx="76.5" cy="176" rx="5.5" ry="2.5" fill="none" stroke="#303030" stroke-width="1"/>
<path d="M71 185 A5.5 2.5 0 0 0 82 185" fill="none" stroke="#303030" stroke-width="0.6" stroke-dasharray="1 1"/>
<path d="M71 204 V215 A5.5 2.5 0 0 0 82 215 V204 Z" fill="url(#gBlue)" stroke="#203060" stroke-width="1"/>
<ellipse cx="76.5" cy="204" rx="5.5" ry="2.5" fill="#8ab0e8" stroke="#203060" stroke-width="1"/>
<ellipse cx="79" cy="217.5" rx="6" ry="1.5" fill="#000" opacity="0.18"/>
<path d="M71 232 V243 A5.5 2.5 0 0 0 82 243 V232" fill="#e0e8f0" stroke="#404040" stroke-width="1"/>
<ellipse cx="76.5" cy="232" rx="5.5" ry="2.5" fill="#e0e8f0" stroke="#404040" stroke-width="1"/>
<path d="M71 241 A5.5 2.5 0 0 0 82 241" fill="none" stroke="#404040" stroke-width="0.6" stroke-dasharray="1 1"/>
<path d="M71 260 V271 A5.5 2.5 0 0 0 82 271 V260" fill="none" stroke="#303030" stroke-width="1"/>
<ellipse cx="76.5" cy="260" rx="5.5" ry="2.5" fill="none" stroke="#303030" stroke-width="1"/>
<path d="M71 269 A5.5 2.5 0 0 0 82 269" fill="none" stroke="#303030" stroke-width="0.6" stroke-dasharray="1 1"/><path d="M73 262 L78 270 M76 261 L73 271" stroke="#333" stroke-width="0.8"/>
</svg>
<!-- status bar -->
<div class="a" style="left:0;top:1020px;width:1920px;height:1px;background:#a0a0a0"></div>
<div class="a" style="left:0;top:1021px;width:1920px;height:1px;background:#eef0f6"></div>
<div class="a" style="left:0;top:1040px;width:48px;height:8px;background:#1c1c1c"></div>
<div class="a" style="left:48px;top:1040px;width:344px;height:8px;background:#f0f0f0;border-top:1px solid #c4c8d0"></div>
<div class="a" style="left:392px;top:1040px;width:295px;height:8px;background:#1e1e1e"></div>
<div class="a" style="left:687px;top:1040px;width:44px;height:8px;background:#484848"></div>
<div class="a" style="left:731px;top:1040px;width:2px;height:8px;background:#1e1e1e"></div>
<div class="a" style="left:733px;top:1040px;width:2px;height:8px;background:#3a3a3a"></div>
<div class="a" style="left:735px;top:1040px;width:1185px;height:8px;background:#1e1e1e"></div>
<div class="t" style="left:1816px;top:1042px;font-size:11px;color:#ddd">14:48</div>
<div class="a" style="left:1914px;top:1040px;width:1px;height:8px;background:#888"></div>

<!-- row1 -->
<div class="a" style="left:1337px;top:1003px;width:3px;height:16px;background:repeating-linear-gradient(180deg,#9aa0b0 0 1px,transparent 1px 3px)"></div>
<div class="a" style="left:1341px;top:1003px;width:132px;height:16px;background:#fff"></div>
<svg class="a" style="left:1460px;top:1003px" width="14" height="16"><circle cx="8" cy="6" r="4" fill="none" stroke="#3a6ec0" stroke-width="1.5"/><path d="M5 9 L1 14" stroke="#3a6ec0" stroke-width="1.8"/></svg>
<div class="a" style="left:1477px;top:1003px;width:3px;height:16px;background:repeating-linear-gradient(180deg,#9aa0b0 0 1px,transparent 1px 3px)"></div>
<div class="t" style="left:1486px;top:1006px">绝对 XY 上视图</div>
<div class="sep" style="left:1592px;top:1004px;height:15px"></div>
<div class="t" style="left:1600px;top:1006px">绝对视图</div>
<div class="a" style="left:1658px;top:1003px;width:3px;height:16px;background:repeating-linear-gradient(180deg,#9aa0b0 0 1px,transparent 1px 3px)"></div>
<div class="t" style="left:1668px;top:1006px;font-weight:bold;font-size:12.5px">LAYER0</div>
<div class="sep" style="left:1726px;top:1004px;height:15px"></div>
<div class="sep" style="left:1757px;top:1004px;height:15px"></div>
<div class="a" style="left:1762px;top:1004px;width:32px;height:13px;background:#4a6088"></div>
<div class="sep" style="left:1800px;top:1004px;height:15px"></div>
<div class="a" style="left:1805px;top:1004px;width:32px;height:13px;background:#4a6088"></div>
<div class="sep" style="left:1843px;top:1004px;height:15px"></div>
<div class="a" style="left:1848px;top:1004px;width:32px;height:13px;background:#4a6088"></div>
<div class="sep" style="left:1886px;top:1004px;height:15px"></div>
<svg class="a" style="left:1893px;top:1003px" width="14" height="14"><circle cx="7" cy="7" r="6.2" fill="#1838c0"/><path d="M3 4 Q6 2 8 5 Q7 8 4 9 Z M8 9 Q11 8 12 11 Q9 13 8 11 Z M9 2 Q12 3 12 6 Q10 5 9 2Z" fill="#20b020"/><circle cx="5" cy="4" r="1.5" fill="#fff" opacity="0.5"/></svg>

<!-- row2 -->
<div class="sep" style="left:1132px;top:1023px;height:15px"></div>
<div class="t" style="left:1141px;top:1026px">拴牢</div>
<div class="sep" style="left:1175px;top:1023px;height:15px"></div>
<svg class="a" style="left:1181px;top:1022px" width="18" height="17"><rect x="0.5" y="0.5" width="17" height="16" fill="#c8ccd8" stroke="#606878"/><path d="M4 8 A5 5 0 0 1 13 6 M14 9 A5 5 0 0 1 5 11" fill="none" stroke="#e05050" stroke-width="1.8"/></svg>
<div class="sep" style="left:1206px;top:1023px;height:15px"></div>
<svg class="a" style="left:1212px;top:1021px" width="19" height="19"><rect width="19" height="19" fill="#fde27a"/><path d="M3 3 L9 8 L6 11 Z" fill="#a050d0"/><path d="M8 7 L16 15 L14 17 L6 9 Z" fill="#c0c0d0" stroke="#707080" stroke-width="0.6"/><circle cx="6" cy="6" r="3" fill="#f0d040" opacity="0.8"/></svg>
<div class="sep" style="left:1237px;top:1023px;height:15px"></div>
<svg class="a" style="left:1244px;top:1022px" width="18" height="17"><path d="M3 8 L9 3 L15 5 L10 10 Z" fill="#e8b060" stroke="#906030" stroke-width="0.6"/><rect x="3" y="9" width="8" height="7" fill="#f0f4ff" stroke="#3060b0" stroke-width="0.8"/><circle cx="6" cy="13" r="1.5" fill="#3060b0"/></svg>
<div class="sep" style="left:1268px;top:1023px;height:15px"></div>
<svg class="a" style="left:1275px;top:1021px" width="18" height="19"><text x="9" y="15" font-family="Liberation Sans" font-weight="bold" font-size="16" text-anchor="middle" fill="#4070c8">?</text><ellipse cx="9" cy="17" rx="5" ry="1.4" fill="#000" opacity="0.25"/></svg>
<div class="sep" style="left:1299px;top:1023px;height:15px"></div>
<svg class="a" style="left:1305px;top:1022px" width="19" height="17"><path d="M5 2 L10 0 L14 2 L14 7 L10 9 L5 7Z" fill="#3080e0" stroke="#2050a0" stroke-width="0.6"/><path d="M10 8 L15 6 L18 8 L18 13 L14 16 L10 13Z" fill="#70a0b0" stroke="#204050" stroke-width="0.6"/><path d="M1 11 H9 M6 8 L9 11 L6 14" stroke="#e02020" stroke-width="1.6" fill="none"/></svg>
<div class="sep" style="left:1331px;top:1023px;height:15px"></div>
<svg class="a" style="left:1336px;top:1021px" width="18" height="18"><rect width="18" height="18" fill="#fde27a"/><path d="M2 5 L9 2 L16 5 L9 8 Z" fill="#e020f0"/><path d="M2 5 V13 L9 16 V8 Z" fill="#90a8a0" stroke="#2060d0" stroke-width="0.8"/><path d="M16 5 V13 L9 16 V8 Z" fill="#a0b8b0" stroke="#2060d0" stroke-width="0.8"/></svg>
<div class="sep" style="left:1362px;top:1023px;height:15px"></div>
<div class="a" style="left:1370px;top:1030px;width:12px;height:9px;border:1.5px solid #507050"></div>
<div class="sep" style="left:1423px;top:1023px;height:15px"></div>
<svg class="a" style="left:1430px;top:1022px" width="17" height="17"><rect x="0.5" y="0.5" width="16" height="16" fill="none" stroke="#707890"/><path d="M8.5 1 V16 M1 8.5 H16" stroke="#707890"/></svg>
<div class="sep" style="left:1455px;top:1023px;height:15px"></div>
<div class="t" style="left:1463px;top:1026px">LS: 1.00 PS: 1.00</div>
<div class="sep" style="left:1580px;top:1023px;height:15px"></div>
<div class="t" style="left:1589px;top:1026px">单位: 毫米</div>
<div class="sep" style="left:1654px;top:1023px;height:15px"></div>
<div class="t" style="left:1663px;top:1026px;word-spacing:2.2px">X = 0028.168 Y = 0583.111 Z = 0000.000</div>

<!-- watermark + triad + sticker -->
<svg class="a" style="left:0;top:0" width="1920" height="1048">
 <defs><linearGradient id="orG" x1="0" y1="0" x2="0" y2="1"><stop offset="0" stop-color="#f0a030"/><stop offset="1" stop-color="#f07818"/></linearGradient></defs>
 <g opacity="0.95">
  <path d="M892 516 V539 M896 512 V537 M900 508 V535 M926 508 V535 M930 512 V537 M934 516 V539" stroke="url(#orG)" stroke-width="2"/>
  <path d="M891 539.5 Q902 533 913 539 Q924 533 935 539.5" fill="none" stroke="#f0a030" stroke-width="2"/>
  <path d="M906 516 A9 9 0 1 0 921 519" fill="none" stroke="#f0b030" stroke-width="2.6"/>
  <path d="M913 512 L913 536" stroke="#e86a10" stroke-width="2.8"/>
  <path d="M913 520 Q919 520 920 527" stroke="#f0a020" stroke-width="2.2" fill="none"/>
  <text x="947" y="530" font-family="Liberation Sans" font-size="16.5" fill="#f48a24" font-weight="500" stroke="#f48a24" stroke-width="0.6" textLength="83" lengthAdjust="spacingAndGlyphs">智造资料网</text>
  <text x="947" y="538.5" font-family="Liberation Sans" font-size="4.8" fill="#f09a30" font-weight="bold" textLength="82" lengthAdjust="spacingAndGlyphs">INTELLIGENT MANUFACTURING DATA</text>
 </g>
 <!-- axis triad -->
 <text x="116" y="865" font-family="Liberation Sans" font-size="10" fill="#d8d8e0">Z</text>
 <path d="M120 937 V875" stroke="#20d0e0" stroke-width="3"/>
 <path d="M116.5 878 L120 867 L123.5 878 Z" fill="#20d0e0"/>
 <path d="M121 915 L128 914 L139 915 V937 H121 Z" fill="#8090a8" stroke="#c8c8d0" stroke-width="0.6" opacity="0.9"/>
 <path d="M120 941 L140 943" stroke="#e02020" stroke-width="3"/>
 <path d="M136 939 L145 943 L136 947 Z" fill="#e02020"/>
 <path d="M128 939 L152 938" stroke="#30c030" stroke-width="2"/>
 <path d="M146 936 L155 938 L146 941 Z" fill="#20a020"/>
 <path d="M140 942 L157 941" stroke="#e8e020" stroke-width="1"/>
 <circle cx="120" cy="941" r="3" fill="#707070"/>
 <text x="154" y="941" font-family="Liberation Sans" font-size="9" fill="#e02020">Y</text>
 <path d="M145 943 L152 949 M152 943 L145 949" stroke="#d8d8e0" stroke-width="0.8"/>
 <!-- sticker -->
 <g>
  <ellipse cx="1406" cy="1036" rx="16" ry="3" fill="#b07040" opacity="0.7"/>
  <path d="M1398 969 Q1393 963 1399 964 Q1404 966 1401 972" fill="#a05a28"/>
  <path d="M1408 971 Q1409 965 1412 968 Q1413 972 1410 974" fill="#a05a28"/>
  <circle cx="1389" cy="977" r="6" fill="#c08048" stroke="#8a5028" stroke-width="0.8"/>
  <circle cx="1423.5" cy="977" r="6" fill="#c08048" stroke="#8a5028" stroke-width="0.8"/>
  <circle cx="1389" cy="978" r="2.5" fill="#f0c8b0"/><circle cx="1423.5" cy="978" r="2.5" fill="#f0c8b0"/>
  <ellipse cx="1406" cy="996" rx="27" ry="28" fill="#c08048" stroke="#8a5028" stroke-width="0.8"/>
  <path d="M1388 1018 Q1384 1038 1395 1038 H1420 Q1428 1036 1424 1018 Z" fill="#f8f050" stroke="#c09040" stroke-width="0.6"/>
  <circle cx="1387" cy="1022" r="4" fill="#f8f050" stroke="#c09040" stroke-width="0.6"/>
  <circle cx="1425" cy="1022" r="4" fill="#f8f050" stroke="#c09040" stroke-width="0.6"/>
  <ellipse cx="1406" cy="1001" rx="21" ry="17" fill="#f8f050" stroke="#a86028" stroke-width="0.8"/>
  <circle cx="1395.5" cy="994" r="1.4" fill="#5a2a10"/><circle cx="1416.5" cy="994" r="1.4" fill="#5a2a10"/>
  <ellipse cx="1390" cy="1000" rx="3.5" ry="2.5" fill="#f8a040" opacity="0.8"/><ellipse cx="1422" cy="1000" rx="3.5" ry="2.5" fill="#f8a040" opacity="0.8"/>
  <path d="M1404 997 h4" stroke="#5a2a10" stroke-width="0.8"/>
  <circle cx="1396" cy="1029" r="7" fill="#c08048" stroke="#8a5028" stroke-width="0.6"/>
  <circle cx="1391" cy="1023" r="2.4" fill="#c08048"/><circle cx="1401" cy="1023" r="2.4" fill="#c08048"/>
  <circle cx="1393" cy="1031" r="1.2" fill="#f080a0"/><circle cx="1399" cy="1031" r="1.2" fill="#f080a0"/>
  <circle cx="1367.3" cy="1005.6" r="8.2" fill="#8a5a48"/>
  <text x="1367.3" y="1010" font-family="Liberation Sans" font-size="11" text-anchor="middle" fill="#fff">A</text>
  <circle cx="1374.6" cy="1026" r="8.2" fill="#8a5a48"/>
  <path d="M1369 1022 L1372 1020 H1377 L1380 1022 L1379 1025 L1377 1024.5 V1031 H1372 V1024.5 L1370 1025 Z" fill="#fff"/>
  <text x="1446" y="990" font-family="Liberation Sans" font-size="20" font-weight="bold" text-anchor="middle" fill="#fff" stroke="#c08048" stroke-width="2.4" paint-order="stroke" transform="rotate(8 1446 980)">W</text><circle cx="1441" cy="979" r="1.6" fill="#d8a070"/><circle cx="1450" cy="983" r="1.6" fill="#d8a070"/>
  <circle cx="1436" cy="994" r="3" fill="#c08048"/><circle cx="1453" cy="994" r="3" fill="#c08048"/>
  <ellipse cx="1445" cy="1002" rx="8.5" ry="10" fill="#c08048" stroke="#8a5028" stroke-width="0.6"/>
  <ellipse cx="1445" cy="1002" rx="3" ry="4.5" fill="#fff"/>
  <text x="1447" y="1033" font-family="Liberation Sans" font-size="22" font-weight="bold" text-anchor="middle" fill="#f8f050" stroke="#c09040" stroke-width="2.4" paint-order="stroke" transform="rotate(-8 1447 1022)">W</text>
 </g>
</svg>

</body></html>
